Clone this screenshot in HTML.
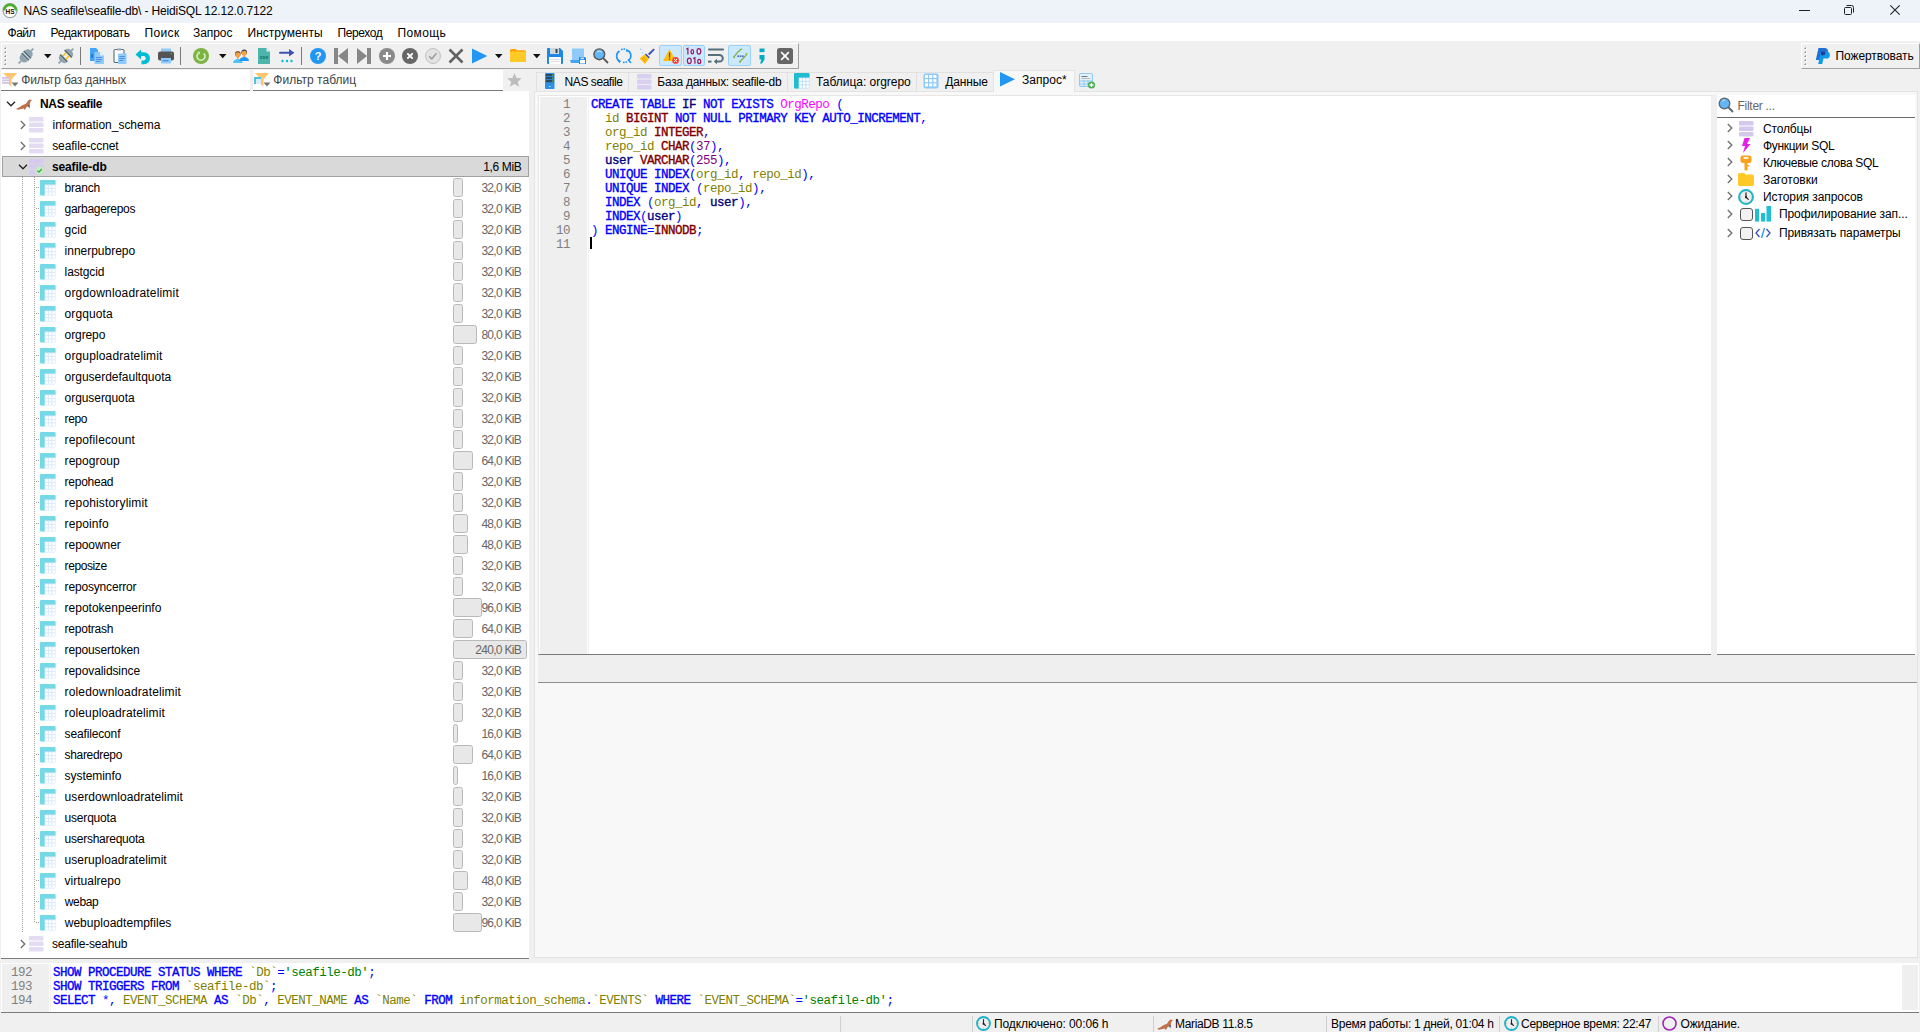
<!DOCTYPE html><html><head><meta charset="utf-8"><style>
*{margin:0;padding:0;box-sizing:border-box}
html,body{width:1920px;height:1032px;overflow:hidden;background:#f0f0f0;font-family:"Liberation Sans",sans-serif;font-size:12px;color:#000;position:relative}
.ab{position:absolute}
.t{position:absolute;white-space:nowrap;line-height:14px}
.mono{font-family:"Liberation Mono",monospace;font-size:12.5px;letter-spacing:-0.5px;line-height:14px;white-space:pre}
.kw{color:#0000ff;-webkit-text-stroke:0.35px #0000ff}
.dt{color:#800000;-webkit-text-stroke:0.35px #800000}
.fn{color:#000080;-webkit-text-stroke:0.35px #000080}
.fld{color:#808000}
.tbl{color:#ff00ff}
.num{color:#800080}
.sym{color:#0000ff}
.str{color:#008000}
svg{position:absolute;overflow:visible}
</style></head><body>
<div class="ab" style="left:0;top:0;width:1920px;height:23px;background:#eef3f9"></div>
<div class="t" style="left:23.40px;top:4px;letter-spacing:-0.154px;">NAS seafile\seafile-db\ - HeidiSQL 12.12.0.7122</div>
<svg style="left:2px;top:3px" width="16" height="16" viewBox="0 0 16 16"><circle cx="8" cy="7.6" r="7" fill="#fff" stroke="#9aa59a" stroke-width="1.2"/><path d="M0.8 7.6A7.2 7.2 0 0 1 15.2 7.6H12.8A4.8 4.4 0 0 0 3.2 7.6Z" fill="#4caf2a"/><text x="8" y="11.2" font-family="Liberation Sans" font-size="8" font-weight="bold" text-anchor="middle" fill="#111" textLength="9" lengthAdjust="spacingAndGlyphs">HS</text></svg>
<div class="ab" style="left:1799px;top:10px;width:11px;height:1px;background:#222"></div>
<svg style="left:1843px;top:4px" width="12" height="12" viewBox="0 0 12 12"><rect x="1.5" y="3.5" width="7" height="7" rx="1" fill="none" stroke="#222"/><path d="M3.5 1.5h5a2 2 0 0 1 2 2v5" fill="none" stroke="#222"/></svg>
<svg style="left:1890px;top:5px" width="10" height="10" viewBox="0 0 10 10"><path d="M0.3 0.3L9.7 9.7M9.7 0.3L0.3 9.7" stroke="#222" stroke-width="1.1"/></svg>
<div class="ab" style="left:0;top:23px;width:1920px;height:18px;background:#fff"></div>
<div class="t" style="left:7.50px;top:26px;letter-spacing:-0.467px;">Файл</div>
<div class="t" style="left:50.60px;top:26px;letter-spacing:-0.292px;">Редактировать</div>
<div class="t" style="left:144.40px;top:26px;letter-spacing:0.400px;">Поиск</div>
<div class="t" style="left:193.00px;top:26px;letter-spacing:-0.060px;">Запрос</div>
<div class="t" style="left:247.50px;top:26px;letter-spacing:0.020px;">Инструменты</div>
<div class="t" style="left:337.50px;top:26px;letter-spacing:-0.408px;">Переход</div>
<div class="t" style="left:397.50px;top:26px;letter-spacing:0.360px;">Помощь</div>
<div class="ab" style="left:1px;top:43px;width:798px;height:26px;background:#f0f0f0;border-top:1px solid #fff;border-left:1px solid #fff;border-right:1px solid #a0a0a0;border-bottom:1px solid #a0a0a0"></div>
<div class="ab" style="left:1801px;top:43px;width:119px;height:26px;background:#f0f0f0;border-top:1px solid #fff;border-left:1px solid #fff;border-right:1px solid #a0a0a0;border-bottom:1px solid #a0a0a0"></div>
<div class="t" style="left:1835.40px;top:49px;letter-spacing:-0.064px;">Пожертвовать</div>
<div class="ab" style="left:1px;top:70px;width:249px;height:21px;background:#fff;border-bottom:1px solid #7a7a7a"></div>
<div class="t" style="left:21.30px;top:73px;letter-spacing:-0.144px;color:#444">Фильтр баз данных</div>
<div class="ab" style="left:253px;top:70px;width:250px;height:21px;background:#fff;border-bottom:1px solid #7a7a7a"></div>
<div class="t" style="left:273.30px;top:73px;letter-spacing:0.025px;color:#444">Фильтр таблиц</div>
<div class="ab" style="left:1px;top:91px;width:528px;height:868px;background:#fff;border-bottom:1px solid #7a7a7a"></div>
<svg style="left:6px;top:101px" width="10" height="6" viewBox="0 0 10 6"><path d="M1 0.8L5 4.8L9 0.8" fill="none" stroke="#222" stroke-width="1.3"/></svg>
<svg style="left:16px;top:95px" width="16" height="16" viewBox="0 0 16 16"><path d="M0 14L3.4 12.2L6.8 10L10 8.8L11.6 6.2L13.4 4.6L16 5L14.6 6.6L13.6 9.5L12.6 12L11 11.5L8.8 15L7.6 13.4L2 14.8Z" fill="#c0714a"/><path d="M12.2 11L13.7 9.2L13.6 13.6Z" fill="#23386b"/></svg>
<div class="t" style="left:40.00px;top:97px;letter-spacing:-0.350px;font-weight:bold;">NAS seafile</div>
<svg style="left:20px;top:120px" width="6" height="10" viewBox="0 0 6 10"><path d="M0.8 1L4.8 5L0.8 9" fill="none" stroke="#6e6e6e" stroke-width="1.3"/></svg>
<svg style="left:29px;top:117px" width="15" height="16" viewBox="0 0 15 16"><rect x="0" y="0" width="14.5" height="4.5" rx="1" fill="#e4dcf3"/><rect x="0" y="5.5" width="14.5" height="4.5" rx="1" fill="#e4dcf3"/><rect x="0" y="11" width="14.5" height="4.5" rx="1" fill="#e4dcf3"/></svg>
<div class="t" style="left:52.50px;top:118px;letter-spacing:-0.012px;">information_schema</div>
<svg style="left:20px;top:141px" width="6" height="10" viewBox="0 0 6 10"><path d="M0.8 1L4.8 5L0.8 9" fill="none" stroke="#6e6e6e" stroke-width="1.3"/></svg>
<svg style="left:29px;top:138px" width="15" height="16" viewBox="0 0 15 16"><rect x="0" y="0" width="14.5" height="4.5" rx="1" fill="#e4dcf3"/><rect x="0" y="5.5" width="14.5" height="4.5" rx="1" fill="#e4dcf3"/><rect x="0" y="11" width="14.5" height="4.5" rx="1" fill="#e4dcf3"/></svg>
<div class="t" style="left:52.20px;top:139px;letter-spacing:-0.071px;">seafile-ccnet</div>
<div class="ab" style="left:2px;top:156px;width:527px;height:21px;background:#d9d9d9;border:1px solid #a0a0a0"></div>
<svg style="left:18px;top:164px" width="10" height="6" viewBox="0 0 10 6"><path d="M1 0.8L5 4.8L9 0.8" fill="none" stroke="#222" stroke-width="1.3"/></svg>
<svg style="left:29px;top:159px" width="15" height="16" viewBox="0 0 15 16"><rect x="0" y="0" width="14.5" height="4.5" rx="1" fill="#d7c9f0"/><rect x="0" y="5.5" width="14.5" height="4.5" rx="1" fill="#d7c9f0"/><rect x="0" y="11" width="14.5" height="4.5" rx="1" fill="#d7c9f0"/></svg>
<svg style="left:35px;top:166px" width="9" height="9" viewBox="0 0 9 9"><circle cx="4.5" cy="4.5" r="4.3" fill="#c6ecc6"/><path d="M2.2 4.6L3.9 6.2L6.8 3" fill="none" stroke="#2eaa3e" stroke-width="1.2"/></svg>
<div class="t" style="left:51.90px;top:160px;letter-spacing:-0.128px;font-weight:bold;">seafile-db</div>
<div class="t" style="left:483.30px;top:160px;letter-spacing:-0.383px;">1,6 MiB</div>
<div class="ab" style="left:22px;top:177px;width:1px;height:755px;background:repeating-linear-gradient(#a0a0a0 0 1px,transparent 1px 2px)"></div>
<div class="ab" style="left:34px;top:177px;width:1px;height:746px;background:repeating-linear-gradient(#a0a0a0 0 1px,transparent 1px 2px)"></div>
<div class="ab" style="left:36px;top:187px;width:4px;height:1px;background:repeating-linear-gradient(90deg,#a0a0a0 0 1px,transparent 1px 2px)"></div>
<svg style="left:40px;top:180px" width="16" height="16" viewBox="0 0 16 16"><rect x="0" y="0" width="15.5" height="15.5" rx="1.2" fill="#d3e8fb"/><path d="M1.2 0H14.3A1.2 1.2 0 0 1 15.5 1.2V4.6H4.6V15.5H1.2A1.2 1.2 0 0 1 0 14.3V1.2A1.2 1.2 0 0 1 1.2 0Z" fill="#74d8e6"/><rect x="5.3" y="5.3" width="2.6" height="2.6" fill="#fff"/><rect x="5.3" y="8.8" width="2.6" height="2.6" fill="#fff"/><rect x="5.3" y="12.3" width="2.6" height="2.6" fill="#fff"/><rect x="8.8" y="5.3" width="2.6" height="2.6" fill="#fff"/><rect x="8.8" y="8.8" width="2.6" height="2.6" fill="#fff"/><rect x="8.8" y="12.3" width="2.6" height="2.6" fill="#fff"/><rect x="12.3" y="5.3" width="2.6" height="2.6" fill="#fff"/><rect x="12.3" y="8.8" width="2.6" height="2.6" fill="#fff"/><rect x="12.3" y="12.3" width="2.6" height="2.6" fill="#fff"/></svg>
<div class="t" style="left:64.60px;top:181px;letter-spacing:-0.200px;">branch</div>
<div class="ab" style="left:453px;top:178px;width:10px;height:19px;background:#e8e8e8;border:1px solid #b9b9b9;border-radius:2.5px"></div>
<div class="t" style="left:481.40px;top:181px;letter-spacing:-0.729px;color:#666">32,0 KiB</div>
<div class="ab" style="left:36px;top:208px;width:4px;height:1px;background:repeating-linear-gradient(90deg,#a0a0a0 0 1px,transparent 1px 2px)"></div>
<svg style="left:40px;top:201px" width="16" height="16" viewBox="0 0 16 16"><rect x="0" y="0" width="15.5" height="15.5" rx="1.2" fill="#d3e8fb"/><path d="M1.2 0H14.3A1.2 1.2 0 0 1 15.5 1.2V4.6H4.6V15.5H1.2A1.2 1.2 0 0 1 0 14.3V1.2A1.2 1.2 0 0 1 1.2 0Z" fill="#74d8e6"/><rect x="5.3" y="5.3" width="2.6" height="2.6" fill="#fff"/><rect x="5.3" y="8.8" width="2.6" height="2.6" fill="#fff"/><rect x="5.3" y="12.3" width="2.6" height="2.6" fill="#fff"/><rect x="8.8" y="5.3" width="2.6" height="2.6" fill="#fff"/><rect x="8.8" y="8.8" width="2.6" height="2.6" fill="#fff"/><rect x="8.8" y="12.3" width="2.6" height="2.6" fill="#fff"/><rect x="12.3" y="5.3" width="2.6" height="2.6" fill="#fff"/><rect x="12.3" y="8.8" width="2.6" height="2.6" fill="#fff"/><rect x="12.3" y="12.3" width="2.6" height="2.6" fill="#fff"/></svg>
<div class="t" style="left:64.60px;top:202px;letter-spacing:-0.291px;">garbagerepos</div>
<div class="ab" style="left:453px;top:199px;width:10px;height:19px;background:#e8e8e8;border:1px solid #b9b9b9;border-radius:2.5px"></div>
<div class="t" style="left:481.40px;top:202px;letter-spacing:-0.729px;color:#666">32,0 KiB</div>
<div class="ab" style="left:36px;top:229px;width:4px;height:1px;background:repeating-linear-gradient(90deg,#a0a0a0 0 1px,transparent 1px 2px)"></div>
<svg style="left:40px;top:222px" width="16" height="16" viewBox="0 0 16 16"><rect x="0" y="0" width="15.5" height="15.5" rx="1.2" fill="#d3e8fb"/><path d="M1.2 0H14.3A1.2 1.2 0 0 1 15.5 1.2V4.6H4.6V15.5H1.2A1.2 1.2 0 0 1 0 14.3V1.2A1.2 1.2 0 0 1 1.2 0Z" fill="#74d8e6"/><rect x="5.3" y="5.3" width="2.6" height="2.6" fill="#fff"/><rect x="5.3" y="8.8" width="2.6" height="2.6" fill="#fff"/><rect x="5.3" y="12.3" width="2.6" height="2.6" fill="#fff"/><rect x="8.8" y="5.3" width="2.6" height="2.6" fill="#fff"/><rect x="8.8" y="8.8" width="2.6" height="2.6" fill="#fff"/><rect x="8.8" y="12.3" width="2.6" height="2.6" fill="#fff"/><rect x="12.3" y="5.3" width="2.6" height="2.6" fill="#fff"/><rect x="12.3" y="8.8" width="2.6" height="2.6" fill="#fff"/><rect x="12.3" y="12.3" width="2.6" height="2.6" fill="#fff"/></svg>
<div class="t" style="left:64.60px;top:223px;">gcid</div>
<div class="ab" style="left:453px;top:220px;width:10px;height:19px;background:#e8e8e8;border:1px solid #b9b9b9;border-radius:2.5px"></div>
<div class="t" style="left:481.40px;top:223px;letter-spacing:-0.729px;color:#666">32,0 KiB</div>
<div class="ab" style="left:36px;top:250px;width:4px;height:1px;background:repeating-linear-gradient(90deg,#a0a0a0 0 1px,transparent 1px 2px)"></div>
<svg style="left:40px;top:243px" width="16" height="16" viewBox="0 0 16 16"><rect x="0" y="0" width="15.5" height="15.5" rx="1.2" fill="#d3e8fb"/><path d="M1.2 0H14.3A1.2 1.2 0 0 1 15.5 1.2V4.6H4.6V15.5H1.2A1.2 1.2 0 0 1 0 14.3V1.2A1.2 1.2 0 0 1 1.2 0Z" fill="#74d8e6"/><rect x="5.3" y="5.3" width="2.6" height="2.6" fill="#fff"/><rect x="5.3" y="8.8" width="2.6" height="2.6" fill="#fff"/><rect x="5.3" y="12.3" width="2.6" height="2.6" fill="#fff"/><rect x="8.8" y="5.3" width="2.6" height="2.6" fill="#fff"/><rect x="8.8" y="8.8" width="2.6" height="2.6" fill="#fff"/><rect x="8.8" y="12.3" width="2.6" height="2.6" fill="#fff"/><rect x="12.3" y="5.3" width="2.6" height="2.6" fill="#fff"/><rect x="12.3" y="8.8" width="2.6" height="2.6" fill="#fff"/><rect x="12.3" y="12.3" width="2.6" height="2.6" fill="#fff"/></svg>
<div class="t" style="left:64.60px;top:244px;letter-spacing:-0.018px;">innerpubrepo</div>
<div class="ab" style="left:453px;top:241px;width:10px;height:19px;background:#e8e8e8;border:1px solid #b9b9b9;border-radius:2.5px"></div>
<div class="t" style="left:481.40px;top:244px;letter-spacing:-0.729px;color:#666">32,0 KiB</div>
<div class="ab" style="left:36px;top:271px;width:4px;height:1px;background:repeating-linear-gradient(90deg,#a0a0a0 0 1px,transparent 1px 2px)"></div>
<svg style="left:40px;top:264px" width="16" height="16" viewBox="0 0 16 16"><rect x="0" y="0" width="15.5" height="15.5" rx="1.2" fill="#d3e8fb"/><path d="M1.2 0H14.3A1.2 1.2 0 0 1 15.5 1.2V4.6H4.6V15.5H1.2A1.2 1.2 0 0 1 0 14.3V1.2A1.2 1.2 0 0 1 1.2 0Z" fill="#74d8e6"/><rect x="5.3" y="5.3" width="2.6" height="2.6" fill="#fff"/><rect x="5.3" y="8.8" width="2.6" height="2.6" fill="#fff"/><rect x="5.3" y="12.3" width="2.6" height="2.6" fill="#fff"/><rect x="8.8" y="5.3" width="2.6" height="2.6" fill="#fff"/><rect x="8.8" y="8.8" width="2.6" height="2.6" fill="#fff"/><rect x="8.8" y="12.3" width="2.6" height="2.6" fill="#fff"/><rect x="12.3" y="5.3" width="2.6" height="2.6" fill="#fff"/><rect x="12.3" y="8.8" width="2.6" height="2.6" fill="#fff"/><rect x="12.3" y="12.3" width="2.6" height="2.6" fill="#fff"/></svg>
<div class="t" style="left:64.60px;top:265px;letter-spacing:-0.114px;">lastgcid</div>
<div class="ab" style="left:453px;top:262px;width:10px;height:19px;background:#e8e8e8;border:1px solid #b9b9b9;border-radius:2.5px"></div>
<div class="t" style="left:481.40px;top:265px;letter-spacing:-0.729px;color:#666">32,0 KiB</div>
<div class="ab" style="left:36px;top:292px;width:4px;height:1px;background:repeating-linear-gradient(90deg,#a0a0a0 0 1px,transparent 1px 2px)"></div>
<svg style="left:40px;top:285px" width="16" height="16" viewBox="0 0 16 16"><rect x="0" y="0" width="15.5" height="15.5" rx="1.2" fill="#d3e8fb"/><path d="M1.2 0H14.3A1.2 1.2 0 0 1 15.5 1.2V4.6H4.6V15.5H1.2A1.2 1.2 0 0 1 0 14.3V1.2A1.2 1.2 0 0 1 1.2 0Z" fill="#74d8e6"/><rect x="5.3" y="5.3" width="2.6" height="2.6" fill="#fff"/><rect x="5.3" y="8.8" width="2.6" height="2.6" fill="#fff"/><rect x="5.3" y="12.3" width="2.6" height="2.6" fill="#fff"/><rect x="8.8" y="5.3" width="2.6" height="2.6" fill="#fff"/><rect x="8.8" y="8.8" width="2.6" height="2.6" fill="#fff"/><rect x="8.8" y="12.3" width="2.6" height="2.6" fill="#fff"/><rect x="12.3" y="5.3" width="2.6" height="2.6" fill="#fff"/><rect x="12.3" y="8.8" width="2.6" height="2.6" fill="#fff"/><rect x="12.3" y="12.3" width="2.6" height="2.6" fill="#fff"/></svg>
<div class="t" style="left:64.60px;top:286px;letter-spacing:0.179px;">orgdownloadratelimit</div>
<div class="ab" style="left:453px;top:283px;width:10px;height:19px;background:#e8e8e8;border:1px solid #b9b9b9;border-radius:2.5px"></div>
<div class="t" style="left:481.40px;top:286px;letter-spacing:-0.729px;color:#666">32,0 KiB</div>
<div class="ab" style="left:36px;top:313px;width:4px;height:1px;background:repeating-linear-gradient(90deg,#a0a0a0 0 1px,transparent 1px 2px)"></div>
<svg style="left:40px;top:306px" width="16" height="16" viewBox="0 0 16 16"><rect x="0" y="0" width="15.5" height="15.5" rx="1.2" fill="#d3e8fb"/><path d="M1.2 0H14.3A1.2 1.2 0 0 1 15.5 1.2V4.6H4.6V15.5H1.2A1.2 1.2 0 0 1 0 14.3V1.2A1.2 1.2 0 0 1 1.2 0Z" fill="#74d8e6"/><rect x="5.3" y="5.3" width="2.6" height="2.6" fill="#fff"/><rect x="5.3" y="8.8" width="2.6" height="2.6" fill="#fff"/><rect x="5.3" y="12.3" width="2.6" height="2.6" fill="#fff"/><rect x="8.8" y="5.3" width="2.6" height="2.6" fill="#fff"/><rect x="8.8" y="8.8" width="2.6" height="2.6" fill="#fff"/><rect x="8.8" y="12.3" width="2.6" height="2.6" fill="#fff"/><rect x="12.3" y="5.3" width="2.6" height="2.6" fill="#fff"/><rect x="12.3" y="8.8" width="2.6" height="2.6" fill="#fff"/><rect x="12.3" y="12.3" width="2.6" height="2.6" fill="#fff"/></svg>
<div class="t" style="left:64.60px;top:307px;letter-spacing:0.086px;">orgquota</div>
<div class="ab" style="left:453px;top:304px;width:10px;height:19px;background:#e8e8e8;border:1px solid #b9b9b9;border-radius:2.5px"></div>
<div class="t" style="left:481.40px;top:307px;letter-spacing:-0.729px;color:#666">32,0 KiB</div>
<div class="ab" style="left:36px;top:334px;width:4px;height:1px;background:repeating-linear-gradient(90deg,#a0a0a0 0 1px,transparent 1px 2px)"></div>
<svg style="left:40px;top:327px" width="16" height="16" viewBox="0 0 16 16"><rect x="0" y="0" width="15.5" height="15.5" rx="1.2" fill="#d3e8fb"/><path d="M1.2 0H14.3A1.2 1.2 0 0 1 15.5 1.2V4.6H4.6V15.5H1.2A1.2 1.2 0 0 1 0 14.3V1.2A1.2 1.2 0 0 1 1.2 0Z" fill="#74d8e6"/><rect x="5.3" y="5.3" width="2.6" height="2.6" fill="#fff"/><rect x="5.3" y="8.8" width="2.6" height="2.6" fill="#fff"/><rect x="5.3" y="12.3" width="2.6" height="2.6" fill="#fff"/><rect x="8.8" y="5.3" width="2.6" height="2.6" fill="#fff"/><rect x="8.8" y="8.8" width="2.6" height="2.6" fill="#fff"/><rect x="8.8" y="12.3" width="2.6" height="2.6" fill="#fff"/><rect x="12.3" y="5.3" width="2.6" height="2.6" fill="#fff"/><rect x="12.3" y="8.8" width="2.6" height="2.6" fill="#fff"/><rect x="12.3" y="12.3" width="2.6" height="2.6" fill="#fff"/></svg>
<div class="t" style="left:64.60px;top:328px;letter-spacing:-0.100px;">orgrepo</div>
<div class="ab" style="left:453px;top:325px;width:24px;height:19px;background:#e8e8e8;border:1px solid #b9b9b9;border-radius:2.5px"></div>
<div class="t" style="left:481.40px;top:328px;letter-spacing:-0.729px;color:#666">80,0 KiB</div>
<div class="ab" style="left:36px;top:355px;width:4px;height:1px;background:repeating-linear-gradient(90deg,#a0a0a0 0 1px,transparent 1px 2px)"></div>
<svg style="left:40px;top:348px" width="16" height="16" viewBox="0 0 16 16"><rect x="0" y="0" width="15.5" height="15.5" rx="1.2" fill="#d3e8fb"/><path d="M1.2 0H14.3A1.2 1.2 0 0 1 15.5 1.2V4.6H4.6V15.5H1.2A1.2 1.2 0 0 1 0 14.3V1.2A1.2 1.2 0 0 1 1.2 0Z" fill="#74d8e6"/><rect x="5.3" y="5.3" width="2.6" height="2.6" fill="#fff"/><rect x="5.3" y="8.8" width="2.6" height="2.6" fill="#fff"/><rect x="5.3" y="12.3" width="2.6" height="2.6" fill="#fff"/><rect x="8.8" y="5.3" width="2.6" height="2.6" fill="#fff"/><rect x="8.8" y="8.8" width="2.6" height="2.6" fill="#fff"/><rect x="8.8" y="12.3" width="2.6" height="2.6" fill="#fff"/><rect x="12.3" y="5.3" width="2.6" height="2.6" fill="#fff"/><rect x="12.3" y="8.8" width="2.6" height="2.6" fill="#fff"/><rect x="12.3" y="12.3" width="2.6" height="2.6" fill="#fff"/></svg>
<div class="t" style="left:64.60px;top:349px;letter-spacing:0.135px;">orguploadratelimit</div>
<div class="ab" style="left:453px;top:346px;width:10px;height:19px;background:#e8e8e8;border:1px solid #b9b9b9;border-radius:2.5px"></div>
<div class="t" style="left:481.40px;top:349px;letter-spacing:-0.729px;color:#666">32,0 KiB</div>
<div class="ab" style="left:36px;top:376px;width:4px;height:1px;background:repeating-linear-gradient(90deg,#a0a0a0 0 1px,transparent 1px 2px)"></div>
<svg style="left:40px;top:369px" width="16" height="16" viewBox="0 0 16 16"><rect x="0" y="0" width="15.5" height="15.5" rx="1.2" fill="#d3e8fb"/><path d="M1.2 0H14.3A1.2 1.2 0 0 1 15.5 1.2V4.6H4.6V15.5H1.2A1.2 1.2 0 0 1 0 14.3V1.2A1.2 1.2 0 0 1 1.2 0Z" fill="#74d8e6"/><rect x="5.3" y="5.3" width="2.6" height="2.6" fill="#fff"/><rect x="5.3" y="8.8" width="2.6" height="2.6" fill="#fff"/><rect x="5.3" y="12.3" width="2.6" height="2.6" fill="#fff"/><rect x="8.8" y="5.3" width="2.6" height="2.6" fill="#fff"/><rect x="8.8" y="8.8" width="2.6" height="2.6" fill="#fff"/><rect x="8.8" y="12.3" width="2.6" height="2.6" fill="#fff"/><rect x="12.3" y="5.3" width="2.6" height="2.6" fill="#fff"/><rect x="12.3" y="8.8" width="2.6" height="2.6" fill="#fff"/><rect x="12.3" y="12.3" width="2.6" height="2.6" fill="#fff"/></svg>
<div class="t" style="left:64.60px;top:370px;letter-spacing:-0.011px;">orguserdefaultquota</div>
<div class="ab" style="left:453px;top:367px;width:10px;height:19px;background:#e8e8e8;border:1px solid #b9b9b9;border-radius:2.5px"></div>
<div class="t" style="left:481.40px;top:370px;letter-spacing:-0.729px;color:#666">32,0 KiB</div>
<div class="ab" style="left:36px;top:397px;width:4px;height:1px;background:repeating-linear-gradient(90deg,#a0a0a0 0 1px,transparent 1px 2px)"></div>
<svg style="left:40px;top:390px" width="16" height="16" viewBox="0 0 16 16"><rect x="0" y="0" width="15.5" height="15.5" rx="1.2" fill="#d3e8fb"/><path d="M1.2 0H14.3A1.2 1.2 0 0 1 15.5 1.2V4.6H4.6V15.5H1.2A1.2 1.2 0 0 1 0 14.3V1.2A1.2 1.2 0 0 1 1.2 0Z" fill="#74d8e6"/><rect x="5.3" y="5.3" width="2.6" height="2.6" fill="#fff"/><rect x="5.3" y="8.8" width="2.6" height="2.6" fill="#fff"/><rect x="5.3" y="12.3" width="2.6" height="2.6" fill="#fff"/><rect x="8.8" y="5.3" width="2.6" height="2.6" fill="#fff"/><rect x="8.8" y="8.8" width="2.6" height="2.6" fill="#fff"/><rect x="8.8" y="12.3" width="2.6" height="2.6" fill="#fff"/><rect x="12.3" y="5.3" width="2.6" height="2.6" fill="#fff"/><rect x="12.3" y="8.8" width="2.6" height="2.6" fill="#fff"/><rect x="12.3" y="12.3" width="2.6" height="2.6" fill="#fff"/></svg>
<div class="t" style="left:64.60px;top:391px;letter-spacing:-0.064px;">orguserquota</div>
<div class="ab" style="left:453px;top:388px;width:10px;height:19px;background:#e8e8e8;border:1px solid #b9b9b9;border-radius:2.5px"></div>
<div class="t" style="left:481.40px;top:391px;letter-spacing:-0.729px;color:#666">32,0 KiB</div>
<div class="ab" style="left:36px;top:418px;width:4px;height:1px;background:repeating-linear-gradient(90deg,#a0a0a0 0 1px,transparent 1px 2px)"></div>
<svg style="left:40px;top:411px" width="16" height="16" viewBox="0 0 16 16"><rect x="0" y="0" width="15.5" height="15.5" rx="1.2" fill="#d3e8fb"/><path d="M1.2 0H14.3A1.2 1.2 0 0 1 15.5 1.2V4.6H4.6V15.5H1.2A1.2 1.2 0 0 1 0 14.3V1.2A1.2 1.2 0 0 1 1.2 0Z" fill="#74d8e6"/><rect x="5.3" y="5.3" width="2.6" height="2.6" fill="#fff"/><rect x="5.3" y="8.8" width="2.6" height="2.6" fill="#fff"/><rect x="5.3" y="12.3" width="2.6" height="2.6" fill="#fff"/><rect x="8.8" y="5.3" width="2.6" height="2.6" fill="#fff"/><rect x="8.8" y="8.8" width="2.6" height="2.6" fill="#fff"/><rect x="8.8" y="12.3" width="2.6" height="2.6" fill="#fff"/><rect x="12.3" y="5.3" width="2.6" height="2.6" fill="#fff"/><rect x="12.3" y="8.8" width="2.6" height="2.6" fill="#fff"/><rect x="12.3" y="12.3" width="2.6" height="2.6" fill="#fff"/></svg>
<div class="t" style="left:64.60px;top:412px;letter-spacing:-0.367px;">repo</div>
<div class="ab" style="left:453px;top:409px;width:10px;height:19px;background:#e8e8e8;border:1px solid #b9b9b9;border-radius:2.5px"></div>
<div class="t" style="left:481.40px;top:412px;letter-spacing:-0.729px;color:#666">32,0 KiB</div>
<div class="ab" style="left:36px;top:439px;width:4px;height:1px;background:repeating-linear-gradient(90deg,#a0a0a0 0 1px,transparent 1px 2px)"></div>
<svg style="left:40px;top:432px" width="16" height="16" viewBox="0 0 16 16"><rect x="0" y="0" width="15.5" height="15.5" rx="1.2" fill="#d3e8fb"/><path d="M1.2 0H14.3A1.2 1.2 0 0 1 15.5 1.2V4.6H4.6V15.5H1.2A1.2 1.2 0 0 1 0 14.3V1.2A1.2 1.2 0 0 1 1.2 0Z" fill="#74d8e6"/><rect x="5.3" y="5.3" width="2.6" height="2.6" fill="#fff"/><rect x="5.3" y="8.8" width="2.6" height="2.6" fill="#fff"/><rect x="5.3" y="12.3" width="2.6" height="2.6" fill="#fff"/><rect x="8.8" y="5.3" width="2.6" height="2.6" fill="#fff"/><rect x="8.8" y="8.8" width="2.6" height="2.6" fill="#fff"/><rect x="8.8" y="12.3" width="2.6" height="2.6" fill="#fff"/><rect x="12.3" y="5.3" width="2.6" height="2.6" fill="#fff"/><rect x="12.3" y="8.8" width="2.6" height="2.6" fill="#fff"/><rect x="12.3" y="12.3" width="2.6" height="2.6" fill="#fff"/></svg>
<div class="t" style="left:64.60px;top:433px;letter-spacing:0.125px;">repofilecount</div>
<div class="ab" style="left:453px;top:430px;width:10px;height:19px;background:#e8e8e8;border:1px solid #b9b9b9;border-radius:2.5px"></div>
<div class="t" style="left:481.40px;top:433px;letter-spacing:-0.729px;color:#666">32,0 KiB</div>
<div class="ab" style="left:36px;top:460px;width:4px;height:1px;background:repeating-linear-gradient(90deg,#a0a0a0 0 1px,transparent 1px 2px)"></div>
<svg style="left:40px;top:453px" width="16" height="16" viewBox="0 0 16 16"><rect x="0" y="0" width="15.5" height="15.5" rx="1.2" fill="#d3e8fb"/><path d="M1.2 0H14.3A1.2 1.2 0 0 1 15.5 1.2V4.6H4.6V15.5H1.2A1.2 1.2 0 0 1 0 14.3V1.2A1.2 1.2 0 0 1 1.2 0Z" fill="#74d8e6"/><rect x="5.3" y="5.3" width="2.6" height="2.6" fill="#fff"/><rect x="5.3" y="8.8" width="2.6" height="2.6" fill="#fff"/><rect x="5.3" y="12.3" width="2.6" height="2.6" fill="#fff"/><rect x="8.8" y="5.3" width="2.6" height="2.6" fill="#fff"/><rect x="8.8" y="8.8" width="2.6" height="2.6" fill="#fff"/><rect x="8.8" y="12.3" width="2.6" height="2.6" fill="#fff"/><rect x="12.3" y="5.3" width="2.6" height="2.6" fill="#fff"/><rect x="12.3" y="8.8" width="2.6" height="2.6" fill="#fff"/><rect x="12.3" y="12.3" width="2.6" height="2.6" fill="#fff"/></svg>
<div class="t" style="left:64.60px;top:454px;letter-spacing:0.037px;">repogroup</div>
<div class="ab" style="left:453px;top:451px;width:20px;height:19px;background:#e8e8e8;border:1px solid #b9b9b9;border-radius:2.5px"></div>
<div class="t" style="left:481.40px;top:454px;letter-spacing:-0.729px;color:#666">64,0 KiB</div>
<div class="ab" style="left:36px;top:481px;width:4px;height:1px;background:repeating-linear-gradient(90deg,#a0a0a0 0 1px,transparent 1px 2px)"></div>
<svg style="left:40px;top:474px" width="16" height="16" viewBox="0 0 16 16"><rect x="0" y="0" width="15.5" height="15.5" rx="1.2" fill="#d3e8fb"/><path d="M1.2 0H14.3A1.2 1.2 0 0 1 15.5 1.2V4.6H4.6V15.5H1.2A1.2 1.2 0 0 1 0 14.3V1.2A1.2 1.2 0 0 1 1.2 0Z" fill="#74d8e6"/><rect x="5.3" y="5.3" width="2.6" height="2.6" fill="#fff"/><rect x="5.3" y="8.8" width="2.6" height="2.6" fill="#fff"/><rect x="5.3" y="12.3" width="2.6" height="2.6" fill="#fff"/><rect x="8.8" y="5.3" width="2.6" height="2.6" fill="#fff"/><rect x="8.8" y="8.8" width="2.6" height="2.6" fill="#fff"/><rect x="8.8" y="12.3" width="2.6" height="2.6" fill="#fff"/><rect x="12.3" y="5.3" width="2.6" height="2.6" fill="#fff"/><rect x="12.3" y="8.8" width="2.6" height="2.6" fill="#fff"/><rect x="12.3" y="12.3" width="2.6" height="2.6" fill="#fff"/></svg>
<div class="t" style="left:64.60px;top:475px;letter-spacing:-0.257px;">repohead</div>
<div class="ab" style="left:453px;top:472px;width:10px;height:19px;background:#e8e8e8;border:1px solid #b9b9b9;border-radius:2.5px"></div>
<div class="t" style="left:481.40px;top:475px;letter-spacing:-0.729px;color:#666">32,0 KiB</div>
<div class="ab" style="left:36px;top:502px;width:4px;height:1px;background:repeating-linear-gradient(90deg,#a0a0a0 0 1px,transparent 1px 2px)"></div>
<svg style="left:40px;top:495px" width="16" height="16" viewBox="0 0 16 16"><rect x="0" y="0" width="15.5" height="15.5" rx="1.2" fill="#d3e8fb"/><path d="M1.2 0H14.3A1.2 1.2 0 0 1 15.5 1.2V4.6H4.6V15.5H1.2A1.2 1.2 0 0 1 0 14.3V1.2A1.2 1.2 0 0 1 1.2 0Z" fill="#74d8e6"/><rect x="5.3" y="5.3" width="2.6" height="2.6" fill="#fff"/><rect x="5.3" y="8.8" width="2.6" height="2.6" fill="#fff"/><rect x="5.3" y="12.3" width="2.6" height="2.6" fill="#fff"/><rect x="8.8" y="5.3" width="2.6" height="2.6" fill="#fff"/><rect x="8.8" y="8.8" width="2.6" height="2.6" fill="#fff"/><rect x="8.8" y="12.3" width="2.6" height="2.6" fill="#fff"/><rect x="12.3" y="5.3" width="2.6" height="2.6" fill="#fff"/><rect x="12.3" y="8.8" width="2.6" height="2.6" fill="#fff"/><rect x="12.3" y="12.3" width="2.6" height="2.6" fill="#fff"/></svg>
<div class="t" style="left:64.60px;top:496px;letter-spacing:0.153px;">repohistorylimit</div>
<div class="ab" style="left:453px;top:493px;width:10px;height:19px;background:#e8e8e8;border:1px solid #b9b9b9;border-radius:2.5px"></div>
<div class="t" style="left:481.40px;top:496px;letter-spacing:-0.729px;color:#666">32,0 KiB</div>
<div class="ab" style="left:36px;top:523px;width:4px;height:1px;background:repeating-linear-gradient(90deg,#a0a0a0 0 1px,transparent 1px 2px)"></div>
<svg style="left:40px;top:516px" width="16" height="16" viewBox="0 0 16 16"><rect x="0" y="0" width="15.5" height="15.5" rx="1.2" fill="#d3e8fb"/><path d="M1.2 0H14.3A1.2 1.2 0 0 1 15.5 1.2V4.6H4.6V15.5H1.2A1.2 1.2 0 0 1 0 14.3V1.2A1.2 1.2 0 0 1 1.2 0Z" fill="#74d8e6"/><rect x="5.3" y="5.3" width="2.6" height="2.6" fill="#fff"/><rect x="5.3" y="8.8" width="2.6" height="2.6" fill="#fff"/><rect x="5.3" y="12.3" width="2.6" height="2.6" fill="#fff"/><rect x="8.8" y="5.3" width="2.6" height="2.6" fill="#fff"/><rect x="8.8" y="8.8" width="2.6" height="2.6" fill="#fff"/><rect x="8.8" y="12.3" width="2.6" height="2.6" fill="#fff"/><rect x="12.3" y="5.3" width="2.6" height="2.6" fill="#fff"/><rect x="12.3" y="8.8" width="2.6" height="2.6" fill="#fff"/><rect x="12.3" y="12.3" width="2.6" height="2.6" fill="#fff"/></svg>
<div class="t" style="left:64.60px;top:517px;letter-spacing:0.086px;">repoinfo</div>
<div class="ab" style="left:453px;top:514px;width:15px;height:19px;background:#e8e8e8;border:1px solid #b9b9b9;border-radius:2.5px"></div>
<div class="t" style="left:481.40px;top:517px;letter-spacing:-0.729px;color:#666">48,0 KiB</div>
<div class="ab" style="left:36px;top:544px;width:4px;height:1px;background:repeating-linear-gradient(90deg,#a0a0a0 0 1px,transparent 1px 2px)"></div>
<svg style="left:40px;top:537px" width="16" height="16" viewBox="0 0 16 16"><rect x="0" y="0" width="15.5" height="15.5" rx="1.2" fill="#d3e8fb"/><path d="M1.2 0H14.3A1.2 1.2 0 0 1 15.5 1.2V4.6H4.6V15.5H1.2A1.2 1.2 0 0 1 0 14.3V1.2A1.2 1.2 0 0 1 1.2 0Z" fill="#74d8e6"/><rect x="5.3" y="5.3" width="2.6" height="2.6" fill="#fff"/><rect x="5.3" y="8.8" width="2.6" height="2.6" fill="#fff"/><rect x="5.3" y="12.3" width="2.6" height="2.6" fill="#fff"/><rect x="8.8" y="5.3" width="2.6" height="2.6" fill="#fff"/><rect x="8.8" y="8.8" width="2.6" height="2.6" fill="#fff"/><rect x="8.8" y="12.3" width="2.6" height="2.6" fill="#fff"/><rect x="12.3" y="5.3" width="2.6" height="2.6" fill="#fff"/><rect x="12.3" y="8.8" width="2.6" height="2.6" fill="#fff"/><rect x="12.3" y="12.3" width="2.6" height="2.6" fill="#fff"/></svg>
<div class="t" style="left:64.60px;top:538px;letter-spacing:-0.062px;">repoowner</div>
<div class="ab" style="left:453px;top:535px;width:15px;height:19px;background:#e8e8e8;border:1px solid #b9b9b9;border-radius:2.5px"></div>
<div class="t" style="left:481.40px;top:538px;letter-spacing:-0.729px;color:#666">48,0 KiB</div>
<div class="ab" style="left:36px;top:565px;width:4px;height:1px;background:repeating-linear-gradient(90deg,#a0a0a0 0 1px,transparent 1px 2px)"></div>
<svg style="left:40px;top:558px" width="16" height="16" viewBox="0 0 16 16"><rect x="0" y="0" width="15.5" height="15.5" rx="1.2" fill="#d3e8fb"/><path d="M1.2 0H14.3A1.2 1.2 0 0 1 15.5 1.2V4.6H4.6V15.5H1.2A1.2 1.2 0 0 1 0 14.3V1.2A1.2 1.2 0 0 1 1.2 0Z" fill="#74d8e6"/><rect x="5.3" y="5.3" width="2.6" height="2.6" fill="#fff"/><rect x="5.3" y="8.8" width="2.6" height="2.6" fill="#fff"/><rect x="5.3" y="12.3" width="2.6" height="2.6" fill="#fff"/><rect x="8.8" y="5.3" width="2.6" height="2.6" fill="#fff"/><rect x="8.8" y="8.8" width="2.6" height="2.6" fill="#fff"/><rect x="8.8" y="12.3" width="2.6" height="2.6" fill="#fff"/><rect x="12.3" y="5.3" width="2.6" height="2.6" fill="#fff"/><rect x="12.3" y="8.8" width="2.6" height="2.6" fill="#fff"/><rect x="12.3" y="12.3" width="2.6" height="2.6" fill="#fff"/></svg>
<div class="t" style="left:64.60px;top:559px;letter-spacing:-0.414px;">reposize</div>
<div class="ab" style="left:453px;top:556px;width:10px;height:19px;background:#e8e8e8;border:1px solid #b9b9b9;border-radius:2.5px"></div>
<div class="t" style="left:481.40px;top:559px;letter-spacing:-0.729px;color:#666">32,0 KiB</div>
<div class="ab" style="left:36px;top:586px;width:4px;height:1px;background:repeating-linear-gradient(90deg,#a0a0a0 0 1px,transparent 1px 2px)"></div>
<svg style="left:40px;top:579px" width="16" height="16" viewBox="0 0 16 16"><rect x="0" y="0" width="15.5" height="15.5" rx="1.2" fill="#d3e8fb"/><path d="M1.2 0H14.3A1.2 1.2 0 0 1 15.5 1.2V4.6H4.6V15.5H1.2A1.2 1.2 0 0 1 0 14.3V1.2A1.2 1.2 0 0 1 1.2 0Z" fill="#74d8e6"/><rect x="5.3" y="5.3" width="2.6" height="2.6" fill="#fff"/><rect x="5.3" y="8.8" width="2.6" height="2.6" fill="#fff"/><rect x="5.3" y="12.3" width="2.6" height="2.6" fill="#fff"/><rect x="8.8" y="5.3" width="2.6" height="2.6" fill="#fff"/><rect x="8.8" y="8.8" width="2.6" height="2.6" fill="#fff"/><rect x="8.8" y="12.3" width="2.6" height="2.6" fill="#fff"/><rect x="12.3" y="5.3" width="2.6" height="2.6" fill="#fff"/><rect x="12.3" y="8.8" width="2.6" height="2.6" fill="#fff"/><rect x="12.3" y="12.3" width="2.6" height="2.6" fill="#fff"/></svg>
<div class="t" style="left:64.60px;top:580px;letter-spacing:-0.167px;">reposyncerror</div>
<div class="ab" style="left:453px;top:577px;width:10px;height:19px;background:#e8e8e8;border:1px solid #b9b9b9;border-radius:2.5px"></div>
<div class="t" style="left:481.40px;top:580px;letter-spacing:-0.729px;color:#666">32,0 KiB</div>
<div class="ab" style="left:36px;top:607px;width:4px;height:1px;background:repeating-linear-gradient(90deg,#a0a0a0 0 1px,transparent 1px 2px)"></div>
<svg style="left:40px;top:600px" width="16" height="16" viewBox="0 0 16 16"><rect x="0" y="0" width="15.5" height="15.5" rx="1.2" fill="#d3e8fb"/><path d="M1.2 0H14.3A1.2 1.2 0 0 1 15.5 1.2V4.6H4.6V15.5H1.2A1.2 1.2 0 0 1 0 14.3V1.2A1.2 1.2 0 0 1 1.2 0Z" fill="#74d8e6"/><rect x="5.3" y="5.3" width="2.6" height="2.6" fill="#fff"/><rect x="5.3" y="8.8" width="2.6" height="2.6" fill="#fff"/><rect x="5.3" y="12.3" width="2.6" height="2.6" fill="#fff"/><rect x="8.8" y="5.3" width="2.6" height="2.6" fill="#fff"/><rect x="8.8" y="8.8" width="2.6" height="2.6" fill="#fff"/><rect x="8.8" y="12.3" width="2.6" height="2.6" fill="#fff"/><rect x="12.3" y="5.3" width="2.6" height="2.6" fill="#fff"/><rect x="12.3" y="8.8" width="2.6" height="2.6" fill="#fff"/><rect x="12.3" y="12.3" width="2.6" height="2.6" fill="#fff"/></svg>
<div class="t" style="left:64.60px;top:601px;">repotokenpeerinfo</div>
<div class="ab" style="left:453px;top:598px;width:29px;height:19px;background:#e8e8e8;border:1px solid #b9b9b9;border-radius:2.5px"></div>
<div class="t" style="left:481.40px;top:601px;letter-spacing:-0.729px;color:#666">96,0 KiB</div>
<div class="ab" style="left:36px;top:628px;width:4px;height:1px;background:repeating-linear-gradient(90deg,#a0a0a0 0 1px,transparent 1px 2px)"></div>
<svg style="left:40px;top:621px" width="16" height="16" viewBox="0 0 16 16"><rect x="0" y="0" width="15.5" height="15.5" rx="1.2" fill="#d3e8fb"/><path d="M1.2 0H14.3A1.2 1.2 0 0 1 15.5 1.2V4.6H4.6V15.5H1.2A1.2 1.2 0 0 1 0 14.3V1.2A1.2 1.2 0 0 1 1.2 0Z" fill="#74d8e6"/><rect x="5.3" y="5.3" width="2.6" height="2.6" fill="#fff"/><rect x="5.3" y="8.8" width="2.6" height="2.6" fill="#fff"/><rect x="5.3" y="12.3" width="2.6" height="2.6" fill="#fff"/><rect x="8.8" y="5.3" width="2.6" height="2.6" fill="#fff"/><rect x="8.8" y="8.8" width="2.6" height="2.6" fill="#fff"/><rect x="8.8" y="12.3" width="2.6" height="2.6" fill="#fff"/><rect x="12.3" y="5.3" width="2.6" height="2.6" fill="#fff"/><rect x="12.3" y="8.8" width="2.6" height="2.6" fill="#fff"/><rect x="12.3" y="12.3" width="2.6" height="2.6" fill="#fff"/></svg>
<div class="t" style="left:64.60px;top:622px;letter-spacing:-0.225px;">repotrash</div>
<div class="ab" style="left:453px;top:619px;width:20px;height:19px;background:#e8e8e8;border:1px solid #b9b9b9;border-radius:2.5px"></div>
<div class="t" style="left:481.40px;top:622px;letter-spacing:-0.729px;color:#666">64,0 KiB</div>
<div class="ab" style="left:36px;top:649px;width:4px;height:1px;background:repeating-linear-gradient(90deg,#a0a0a0 0 1px,transparent 1px 2px)"></div>
<svg style="left:40px;top:642px" width="16" height="16" viewBox="0 0 16 16"><rect x="0" y="0" width="15.5" height="15.5" rx="1.2" fill="#d3e8fb"/><path d="M1.2 0H14.3A1.2 1.2 0 0 1 15.5 1.2V4.6H4.6V15.5H1.2A1.2 1.2 0 0 1 0 14.3V1.2A1.2 1.2 0 0 1 1.2 0Z" fill="#74d8e6"/><rect x="5.3" y="5.3" width="2.6" height="2.6" fill="#fff"/><rect x="5.3" y="8.8" width="2.6" height="2.6" fill="#fff"/><rect x="5.3" y="12.3" width="2.6" height="2.6" fill="#fff"/><rect x="8.8" y="5.3" width="2.6" height="2.6" fill="#fff"/><rect x="8.8" y="8.8" width="2.6" height="2.6" fill="#fff"/><rect x="8.8" y="12.3" width="2.6" height="2.6" fill="#fff"/><rect x="12.3" y="5.3" width="2.6" height="2.6" fill="#fff"/><rect x="12.3" y="8.8" width="2.6" height="2.6" fill="#fff"/><rect x="12.3" y="12.3" width="2.6" height="2.6" fill="#fff"/></svg>
<div class="t" style="left:64.60px;top:643px;letter-spacing:-0.133px;">repousertoken</div>
<div class="ab" style="left:453px;top:640px;width:74px;height:19px;background:#e8e8e8;border:1px solid #b9b9b9;border-radius:2.5px"></div>
<div class="t" style="left:475.20px;top:643px;letter-spacing:-0.688px;color:#666">240,0 KiB</div>
<div class="ab" style="left:36px;top:670px;width:4px;height:1px;background:repeating-linear-gradient(90deg,#a0a0a0 0 1px,transparent 1px 2px)"></div>
<svg style="left:40px;top:663px" width="16" height="16" viewBox="0 0 16 16"><rect x="0" y="0" width="15.5" height="15.5" rx="1.2" fill="#d3e8fb"/><path d="M1.2 0H14.3A1.2 1.2 0 0 1 15.5 1.2V4.6H4.6V15.5H1.2A1.2 1.2 0 0 1 0 14.3V1.2A1.2 1.2 0 0 1 1.2 0Z" fill="#74d8e6"/><rect x="5.3" y="5.3" width="2.6" height="2.6" fill="#fff"/><rect x="5.3" y="8.8" width="2.6" height="2.6" fill="#fff"/><rect x="5.3" y="12.3" width="2.6" height="2.6" fill="#fff"/><rect x="8.8" y="5.3" width="2.6" height="2.6" fill="#fff"/><rect x="8.8" y="8.8" width="2.6" height="2.6" fill="#fff"/><rect x="8.8" y="12.3" width="2.6" height="2.6" fill="#fff"/><rect x="12.3" y="5.3" width="2.6" height="2.6" fill="#fff"/><rect x="12.3" y="8.8" width="2.6" height="2.6" fill="#fff"/><rect x="12.3" y="12.3" width="2.6" height="2.6" fill="#fff"/></svg>
<div class="t" style="left:64.60px;top:664px;letter-spacing:-0.092px;">repovalidsince</div>
<div class="ab" style="left:453px;top:661px;width:10px;height:19px;background:#e8e8e8;border:1px solid #b9b9b9;border-radius:2.5px"></div>
<div class="t" style="left:481.40px;top:664px;letter-spacing:-0.729px;color:#666">32,0 KiB</div>
<div class="ab" style="left:36px;top:691px;width:4px;height:1px;background:repeating-linear-gradient(90deg,#a0a0a0 0 1px,transparent 1px 2px)"></div>
<svg style="left:40px;top:684px" width="16" height="16" viewBox="0 0 16 16"><rect x="0" y="0" width="15.5" height="15.5" rx="1.2" fill="#d3e8fb"/><path d="M1.2 0H14.3A1.2 1.2 0 0 1 15.5 1.2V4.6H4.6V15.5H1.2A1.2 1.2 0 0 1 0 14.3V1.2A1.2 1.2 0 0 1 1.2 0Z" fill="#74d8e6"/><rect x="5.3" y="5.3" width="2.6" height="2.6" fill="#fff"/><rect x="5.3" y="8.8" width="2.6" height="2.6" fill="#fff"/><rect x="5.3" y="12.3" width="2.6" height="2.6" fill="#fff"/><rect x="8.8" y="5.3" width="2.6" height="2.6" fill="#fff"/><rect x="8.8" y="8.8" width="2.6" height="2.6" fill="#fff"/><rect x="8.8" y="12.3" width="2.6" height="2.6" fill="#fff"/><rect x="12.3" y="5.3" width="2.6" height="2.6" fill="#fff"/><rect x="12.3" y="8.8" width="2.6" height="2.6" fill="#fff"/><rect x="12.3" y="12.3" width="2.6" height="2.6" fill="#fff"/></svg>
<div class="t" style="left:64.60px;top:685px;letter-spacing:0.145px;">roledownloadratelimit</div>
<div class="ab" style="left:453px;top:682px;width:10px;height:19px;background:#e8e8e8;border:1px solid #b9b9b9;border-radius:2.5px"></div>
<div class="t" style="left:481.40px;top:685px;letter-spacing:-0.729px;color:#666">32,0 KiB</div>
<div class="ab" style="left:36px;top:712px;width:4px;height:1px;background:repeating-linear-gradient(90deg,#a0a0a0 0 1px,transparent 1px 2px)"></div>
<svg style="left:40px;top:705px" width="16" height="16" viewBox="0 0 16 16"><rect x="0" y="0" width="15.5" height="15.5" rx="1.2" fill="#d3e8fb"/><path d="M1.2 0H14.3A1.2 1.2 0 0 1 15.5 1.2V4.6H4.6V15.5H1.2A1.2 1.2 0 0 1 0 14.3V1.2A1.2 1.2 0 0 1 1.2 0Z" fill="#74d8e6"/><rect x="5.3" y="5.3" width="2.6" height="2.6" fill="#fff"/><rect x="5.3" y="8.8" width="2.6" height="2.6" fill="#fff"/><rect x="5.3" y="12.3" width="2.6" height="2.6" fill="#fff"/><rect x="8.8" y="5.3" width="2.6" height="2.6" fill="#fff"/><rect x="8.8" y="8.8" width="2.6" height="2.6" fill="#fff"/><rect x="8.8" y="12.3" width="2.6" height="2.6" fill="#fff"/><rect x="12.3" y="5.3" width="2.6" height="2.6" fill="#fff"/><rect x="12.3" y="8.8" width="2.6" height="2.6" fill="#fff"/><rect x="12.3" y="12.3" width="2.6" height="2.6" fill="#fff"/></svg>
<div class="t" style="left:64.60px;top:706px;letter-spacing:0.122px;">roleuploadratelimit</div>
<div class="ab" style="left:453px;top:703px;width:10px;height:19px;background:#e8e8e8;border:1px solid #b9b9b9;border-radius:2.5px"></div>
<div class="t" style="left:481.40px;top:706px;letter-spacing:-0.729px;color:#666">32,0 KiB</div>
<div class="ab" style="left:36px;top:733px;width:4px;height:1px;background:repeating-linear-gradient(90deg,#a0a0a0 0 1px,transparent 1px 2px)"></div>
<svg style="left:40px;top:726px" width="16" height="16" viewBox="0 0 16 16"><rect x="0" y="0" width="15.5" height="15.5" rx="1.2" fill="#d3e8fb"/><path d="M1.2 0H14.3A1.2 1.2 0 0 1 15.5 1.2V4.6H4.6V15.5H1.2A1.2 1.2 0 0 1 0 14.3V1.2A1.2 1.2 0 0 1 1.2 0Z" fill="#74d8e6"/><rect x="5.3" y="5.3" width="2.6" height="2.6" fill="#fff"/><rect x="5.3" y="8.8" width="2.6" height="2.6" fill="#fff"/><rect x="5.3" y="12.3" width="2.6" height="2.6" fill="#fff"/><rect x="8.8" y="5.3" width="2.6" height="2.6" fill="#fff"/><rect x="8.8" y="8.8" width="2.6" height="2.6" fill="#fff"/><rect x="8.8" y="12.3" width="2.6" height="2.6" fill="#fff"/><rect x="12.3" y="5.3" width="2.6" height="2.6" fill="#fff"/><rect x="12.3" y="8.8" width="2.6" height="2.6" fill="#fff"/><rect x="12.3" y="12.3" width="2.6" height="2.6" fill="#fff"/></svg>
<div class="t" style="left:64.60px;top:727px;letter-spacing:-0.150px;">seafileconf</div>
<div class="ab" style="left:453px;top:724px;width:5px;height:19px;background:#e8e8e8;border:1px solid #b9b9b9;border-radius:2.5px"></div>
<div class="t" style="left:481.40px;top:727px;letter-spacing:-0.729px;color:#666">16,0 KiB</div>
<div class="ab" style="left:36px;top:754px;width:4px;height:1px;background:repeating-linear-gradient(90deg,#a0a0a0 0 1px,transparent 1px 2px)"></div>
<svg style="left:40px;top:747px" width="16" height="16" viewBox="0 0 16 16"><rect x="0" y="0" width="15.5" height="15.5" rx="1.2" fill="#d3e8fb"/><path d="M1.2 0H14.3A1.2 1.2 0 0 1 15.5 1.2V4.6H4.6V15.5H1.2A1.2 1.2 0 0 1 0 14.3V1.2A1.2 1.2 0 0 1 1.2 0Z" fill="#74d8e6"/><rect x="5.3" y="5.3" width="2.6" height="2.6" fill="#fff"/><rect x="5.3" y="8.8" width="2.6" height="2.6" fill="#fff"/><rect x="5.3" y="12.3" width="2.6" height="2.6" fill="#fff"/><rect x="8.8" y="5.3" width="2.6" height="2.6" fill="#fff"/><rect x="8.8" y="8.8" width="2.6" height="2.6" fill="#fff"/><rect x="8.8" y="12.3" width="2.6" height="2.6" fill="#fff"/><rect x="12.3" y="5.3" width="2.6" height="2.6" fill="#fff"/><rect x="12.3" y="8.8" width="2.6" height="2.6" fill="#fff"/><rect x="12.3" y="12.3" width="2.6" height="2.6" fill="#fff"/></svg>
<div class="t" style="left:64.60px;top:748px;letter-spacing:-0.333px;">sharedrepo</div>
<div class="ab" style="left:453px;top:745px;width:20px;height:19px;background:#e8e8e8;border:1px solid #b9b9b9;border-radius:2.5px"></div>
<div class="t" style="left:481.40px;top:748px;letter-spacing:-0.729px;color:#666">64,0 KiB</div>
<div class="ab" style="left:36px;top:775px;width:4px;height:1px;background:repeating-linear-gradient(90deg,#a0a0a0 0 1px,transparent 1px 2px)"></div>
<svg style="left:40px;top:768px" width="16" height="16" viewBox="0 0 16 16"><rect x="0" y="0" width="15.5" height="15.5" rx="1.2" fill="#d3e8fb"/><path d="M1.2 0H14.3A1.2 1.2 0 0 1 15.5 1.2V4.6H4.6V15.5H1.2A1.2 1.2 0 0 1 0 14.3V1.2A1.2 1.2 0 0 1 1.2 0Z" fill="#74d8e6"/><rect x="5.3" y="5.3" width="2.6" height="2.6" fill="#fff"/><rect x="5.3" y="8.8" width="2.6" height="2.6" fill="#fff"/><rect x="5.3" y="12.3" width="2.6" height="2.6" fill="#fff"/><rect x="8.8" y="5.3" width="2.6" height="2.6" fill="#fff"/><rect x="8.8" y="8.8" width="2.6" height="2.6" fill="#fff"/><rect x="8.8" y="12.3" width="2.6" height="2.6" fill="#fff"/><rect x="12.3" y="5.3" width="2.6" height="2.6" fill="#fff"/><rect x="12.3" y="8.8" width="2.6" height="2.6" fill="#fff"/><rect x="12.3" y="12.3" width="2.6" height="2.6" fill="#fff"/></svg>
<div class="t" style="left:64.60px;top:769px;letter-spacing:-0.067px;">systeminfo</div>
<div class="ab" style="left:453px;top:766px;width:5px;height:19px;background:#e8e8e8;border:1px solid #b9b9b9;border-radius:2.5px"></div>
<div class="t" style="left:481.40px;top:769px;letter-spacing:-0.729px;color:#666">16,0 KiB</div>
<div class="ab" style="left:36px;top:796px;width:4px;height:1px;background:repeating-linear-gradient(90deg,#a0a0a0 0 1px,transparent 1px 2px)"></div>
<svg style="left:40px;top:789px" width="16" height="16" viewBox="0 0 16 16"><rect x="0" y="0" width="15.5" height="15.5" rx="1.2" fill="#d3e8fb"/><path d="M1.2 0H14.3A1.2 1.2 0 0 1 15.5 1.2V4.6H4.6V15.5H1.2A1.2 1.2 0 0 1 0 14.3V1.2A1.2 1.2 0 0 1 1.2 0Z" fill="#74d8e6"/><rect x="5.3" y="5.3" width="2.6" height="2.6" fill="#fff"/><rect x="5.3" y="8.8" width="2.6" height="2.6" fill="#fff"/><rect x="5.3" y="12.3" width="2.6" height="2.6" fill="#fff"/><rect x="8.8" y="5.3" width="2.6" height="2.6" fill="#fff"/><rect x="8.8" y="8.8" width="2.6" height="2.6" fill="#fff"/><rect x="8.8" y="12.3" width="2.6" height="2.6" fill="#fff"/><rect x="12.3" y="5.3" width="2.6" height="2.6" fill="#fff"/><rect x="12.3" y="8.8" width="2.6" height="2.6" fill="#fff"/><rect x="12.3" y="12.3" width="2.6" height="2.6" fill="#fff"/></svg>
<div class="t" style="left:64.60px;top:790px;letter-spacing:0.075px;">userdownloadratelimit</div>
<div class="ab" style="left:453px;top:787px;width:10px;height:19px;background:#e8e8e8;border:1px solid #b9b9b9;border-radius:2.5px"></div>
<div class="t" style="left:481.40px;top:790px;letter-spacing:-0.729px;color:#666">32,0 KiB</div>
<div class="ab" style="left:36px;top:817px;width:4px;height:1px;background:repeating-linear-gradient(90deg,#a0a0a0 0 1px,transparent 1px 2px)"></div>
<svg style="left:40px;top:810px" width="16" height="16" viewBox="0 0 16 16"><rect x="0" y="0" width="15.5" height="15.5" rx="1.2" fill="#d3e8fb"/><path d="M1.2 0H14.3A1.2 1.2 0 0 1 15.5 1.2V4.6H4.6V15.5H1.2A1.2 1.2 0 0 1 0 14.3V1.2A1.2 1.2 0 0 1 1.2 0Z" fill="#74d8e6"/><rect x="5.3" y="5.3" width="2.6" height="2.6" fill="#fff"/><rect x="5.3" y="8.8" width="2.6" height="2.6" fill="#fff"/><rect x="5.3" y="12.3" width="2.6" height="2.6" fill="#fff"/><rect x="8.8" y="5.3" width="2.6" height="2.6" fill="#fff"/><rect x="8.8" y="8.8" width="2.6" height="2.6" fill="#fff"/><rect x="8.8" y="12.3" width="2.6" height="2.6" fill="#fff"/><rect x="12.3" y="5.3" width="2.6" height="2.6" fill="#fff"/><rect x="12.3" y="8.8" width="2.6" height="2.6" fill="#fff"/><rect x="12.3" y="12.3" width="2.6" height="2.6" fill="#fff"/></svg>
<div class="t" style="left:64.60px;top:811px;letter-spacing:-0.200px;">userquota</div>
<div class="ab" style="left:453px;top:808px;width:10px;height:19px;background:#e8e8e8;border:1px solid #b9b9b9;border-radius:2.5px"></div>
<div class="t" style="left:481.40px;top:811px;letter-spacing:-0.729px;color:#666">32,0 KiB</div>
<div class="ab" style="left:36px;top:838px;width:4px;height:1px;background:repeating-linear-gradient(90deg,#a0a0a0 0 1px,transparent 1px 2px)"></div>
<svg style="left:40px;top:831px" width="16" height="16" viewBox="0 0 16 16"><rect x="0" y="0" width="15.5" height="15.5" rx="1.2" fill="#d3e8fb"/><path d="M1.2 0H14.3A1.2 1.2 0 0 1 15.5 1.2V4.6H4.6V15.5H1.2A1.2 1.2 0 0 1 0 14.3V1.2A1.2 1.2 0 0 1 1.2 0Z" fill="#74d8e6"/><rect x="5.3" y="5.3" width="2.6" height="2.6" fill="#fff"/><rect x="5.3" y="8.8" width="2.6" height="2.6" fill="#fff"/><rect x="5.3" y="12.3" width="2.6" height="2.6" fill="#fff"/><rect x="8.8" y="5.3" width="2.6" height="2.6" fill="#fff"/><rect x="8.8" y="8.8" width="2.6" height="2.6" fill="#fff"/><rect x="8.8" y="12.3" width="2.6" height="2.6" fill="#fff"/><rect x="12.3" y="5.3" width="2.6" height="2.6" fill="#fff"/><rect x="12.3" y="8.8" width="2.6" height="2.6" fill="#fff"/><rect x="12.3" y="12.3" width="2.6" height="2.6" fill="#fff"/></svg>
<div class="t" style="left:64.60px;top:832px;letter-spacing:-0.254px;">usersharequota</div>
<div class="ab" style="left:453px;top:829px;width:10px;height:19px;background:#e8e8e8;border:1px solid #b9b9b9;border-radius:2.5px"></div>
<div class="t" style="left:481.40px;top:832px;letter-spacing:-0.729px;color:#666">32,0 KiB</div>
<div class="ab" style="left:36px;top:859px;width:4px;height:1px;background:repeating-linear-gradient(90deg,#a0a0a0 0 1px,transparent 1px 2px)"></div>
<svg style="left:40px;top:852px" width="16" height="16" viewBox="0 0 16 16"><rect x="0" y="0" width="15.5" height="15.5" rx="1.2" fill="#d3e8fb"/><path d="M1.2 0H14.3A1.2 1.2 0 0 1 15.5 1.2V4.6H4.6V15.5H1.2A1.2 1.2 0 0 1 0 14.3V1.2A1.2 1.2 0 0 1 1.2 0Z" fill="#74d8e6"/><rect x="5.3" y="5.3" width="2.6" height="2.6" fill="#fff"/><rect x="5.3" y="8.8" width="2.6" height="2.6" fill="#fff"/><rect x="5.3" y="12.3" width="2.6" height="2.6" fill="#fff"/><rect x="8.8" y="5.3" width="2.6" height="2.6" fill="#fff"/><rect x="8.8" y="8.8" width="2.6" height="2.6" fill="#fff"/><rect x="8.8" y="12.3" width="2.6" height="2.6" fill="#fff"/><rect x="12.3" y="5.3" width="2.6" height="2.6" fill="#fff"/><rect x="12.3" y="8.8" width="2.6" height="2.6" fill="#fff"/><rect x="12.3" y="12.3" width="2.6" height="2.6" fill="#fff"/></svg>
<div class="t" style="left:64.60px;top:853px;letter-spacing:0.039px;">useruploadratelimit</div>
<div class="ab" style="left:453px;top:850px;width:10px;height:19px;background:#e8e8e8;border:1px solid #b9b9b9;border-radius:2.5px"></div>
<div class="t" style="left:481.40px;top:853px;letter-spacing:-0.729px;color:#666">32,0 KiB</div>
<div class="ab" style="left:36px;top:880px;width:4px;height:1px;background:repeating-linear-gradient(90deg,#a0a0a0 0 1px,transparent 1px 2px)"></div>
<svg style="left:40px;top:873px" width="16" height="16" viewBox="0 0 16 16"><rect x="0" y="0" width="15.5" height="15.5" rx="1.2" fill="#d3e8fb"/><path d="M1.2 0H14.3A1.2 1.2 0 0 1 15.5 1.2V4.6H4.6V15.5H1.2A1.2 1.2 0 0 1 0 14.3V1.2A1.2 1.2 0 0 1 1.2 0Z" fill="#74d8e6"/><rect x="5.3" y="5.3" width="2.6" height="2.6" fill="#fff"/><rect x="5.3" y="8.8" width="2.6" height="2.6" fill="#fff"/><rect x="5.3" y="12.3" width="2.6" height="2.6" fill="#fff"/><rect x="8.8" y="5.3" width="2.6" height="2.6" fill="#fff"/><rect x="8.8" y="8.8" width="2.6" height="2.6" fill="#fff"/><rect x="8.8" y="12.3" width="2.6" height="2.6" fill="#fff"/><rect x="12.3" y="5.3" width="2.6" height="2.6" fill="#fff"/><rect x="12.3" y="8.8" width="2.6" height="2.6" fill="#fff"/><rect x="12.3" y="12.3" width="2.6" height="2.6" fill="#fff"/></svg>
<div class="t" style="left:64.60px;top:874px;">virtualrepo</div>
<div class="ab" style="left:453px;top:871px;width:15px;height:19px;background:#e8e8e8;border:1px solid #b9b9b9;border-radius:2.5px"></div>
<div class="t" style="left:481.40px;top:874px;letter-spacing:-0.729px;color:#666">48,0 KiB</div>
<div class="ab" style="left:36px;top:901px;width:4px;height:1px;background:repeating-linear-gradient(90deg,#a0a0a0 0 1px,transparent 1px 2px)"></div>
<svg style="left:40px;top:894px" width="16" height="16" viewBox="0 0 16 16"><rect x="0" y="0" width="15.5" height="15.5" rx="1.2" fill="#d3e8fb"/><path d="M1.2 0H14.3A1.2 1.2 0 0 1 15.5 1.2V4.6H4.6V15.5H1.2A1.2 1.2 0 0 1 0 14.3V1.2A1.2 1.2 0 0 1 1.2 0Z" fill="#74d8e6"/><rect x="5.3" y="5.3" width="2.6" height="2.6" fill="#fff"/><rect x="5.3" y="8.8" width="2.6" height="2.6" fill="#fff"/><rect x="5.3" y="12.3" width="2.6" height="2.6" fill="#fff"/><rect x="8.8" y="5.3" width="2.6" height="2.6" fill="#fff"/><rect x="8.8" y="8.8" width="2.6" height="2.6" fill="#fff"/><rect x="8.8" y="12.3" width="2.6" height="2.6" fill="#fff"/><rect x="12.3" y="5.3" width="2.6" height="2.6" fill="#fff"/><rect x="12.3" y="8.8" width="2.6" height="2.6" fill="#fff"/><rect x="12.3" y="12.3" width="2.6" height="2.6" fill="#fff"/></svg>
<div class="t" style="left:64.70px;top:895px;letter-spacing:-0.325px;">webap</div>
<div class="ab" style="left:453px;top:892px;width:10px;height:19px;background:#e8e8e8;border:1px solid #b9b9b9;border-radius:2.5px"></div>
<div class="t" style="left:481.40px;top:895px;letter-spacing:-0.729px;color:#666">32,0 KiB</div>
<div class="ab" style="left:36px;top:922px;width:4px;height:1px;background:repeating-linear-gradient(90deg,#a0a0a0 0 1px,transparent 1px 2px)"></div>
<svg style="left:40px;top:915px" width="16" height="16" viewBox="0 0 16 16"><rect x="0" y="0" width="15.5" height="15.5" rx="1.2" fill="#d3e8fb"/><path d="M1.2 0H14.3A1.2 1.2 0 0 1 15.5 1.2V4.6H4.6V15.5H1.2A1.2 1.2 0 0 1 0 14.3V1.2A1.2 1.2 0 0 1 1.2 0Z" fill="#74d8e6"/><rect x="5.3" y="5.3" width="2.6" height="2.6" fill="#fff"/><rect x="5.3" y="8.8" width="2.6" height="2.6" fill="#fff"/><rect x="5.3" y="12.3" width="2.6" height="2.6" fill="#fff"/><rect x="8.8" y="5.3" width="2.6" height="2.6" fill="#fff"/><rect x="8.8" y="8.8" width="2.6" height="2.6" fill="#fff"/><rect x="8.8" y="12.3" width="2.6" height="2.6" fill="#fff"/><rect x="12.3" y="5.3" width="2.6" height="2.6" fill="#fff"/><rect x="12.3" y="8.8" width="2.6" height="2.6" fill="#fff"/><rect x="12.3" y="12.3" width="2.6" height="2.6" fill="#fff"/></svg>
<div class="t" style="left:64.70px;top:916px;letter-spacing:0.035px;">webuploadtempfiles</div>
<div class="ab" style="left:453px;top:913px;width:29px;height:19px;background:#e8e8e8;border:1px solid #b9b9b9;border-radius:2.5px"></div>
<div class="t" style="left:481.40px;top:916px;letter-spacing:-0.729px;color:#666">96,0 KiB</div>
<svg style="left:20px;top:939px" width="6" height="10" viewBox="0 0 6 10"><path d="M0.8 1L4.8 5L0.8 9" fill="none" stroke="#6e6e6e" stroke-width="1.3"/></svg>
<svg style="left:29px;top:936px" width="15" height="16" viewBox="0 0 15 16"><rect x="0" y="0" width="14.5" height="4.5" rx="1" fill="#e4dcf3"/><rect x="0" y="5.5" width="14.5" height="4.5" rx="1" fill="#e4dcf3"/><rect x="0" y="11" width="14.5" height="4.5" rx="1" fill="#e4dcf3"/></svg>
<div class="t" style="left:51.90px;top:937px;letter-spacing:-0.200px;">seafile-seahub</div>
<div class="ab" style="left:536px;top:72px;width:93px;height:19px;background:#f0f0f0;border:1px solid #e0e0e0;border-bottom:none"></div>
<div class="ab" style="left:628px;top:72px;width:160px;height:19px;background:#f0f0f0;border:1px solid #e0e0e0;border-bottom:none"></div>
<div class="ab" style="left:787px;top:72px;width:130px;height:19px;background:#f0f0f0;border:1px solid #e0e0e0;border-bottom:none"></div>
<div class="ab" style="left:916px;top:72px;width:78px;height:19px;background:#f0f0f0;border:1px solid #e0e0e0;border-bottom:none"></div>
<div class="ab" style="left:993px;top:70px;width:82px;height:25px;background:#f8f8f8;border:1px solid #e3e3e3;border-bottom:none"></div>
<svg style="left:545px;top:73px" width="10" height="16" viewBox="0 0 10 16"><rect x="0" y="0" width="9.5" height="16" rx="0.8" fill="#2f8fe6"/><rect x="1" y="1" width="7.5" height="2.2" fill="#2a4a63"/><rect x="1" y="4" width="7.5" height="2.2" fill="#2a4a63"/><rect x="1" y="7" width="7.5" height="2.2" fill="#2a4a63"/><rect x="7" y="1.6" width="1" height="1" fill="#7ad04e"/><rect x="7" y="4.6" width="1" height="1" fill="#7ad04e"/><rect x="7" y="7.6" width="1" height="1" fill="#7ad04e"/><rect x="4" y="13" width="1.5" height="1" fill="#cfe6fb"/></svg>
<div class="t" style="left:564.60px;top:75px;letter-spacing:-0.440px;">NAS seafile</div>
<svg style="left:637px;top:74px" width="15" height="16" viewBox="0 0 15 16"><rect x="0" y="0" width="14.5" height="4.5" rx="1" fill="#d9cff0"/><rect x="0" y="5.5" width="14.5" height="4.5" rx="1" fill="#d9cff0"/><rect x="0" y="11" width="14.5" height="4.5" rx="1" fill="#d9cff0"/></svg>
<div class="t" style="left:657.30px;top:75px;letter-spacing:-0.264px;">База данных: seafile-db</div>
<svg style="left:794px;top:73px" width="16" height="16" viewBox="0 0 16 16"><rect x="0" y="0" width="15.5" height="15.5" rx="1.2" fill="#b9dcfa"/><path d="M1.2 0H14.3A1.2 1.2 0 0 1 15.5 1.2V4.6H4.6V15.5H1.2A1.2 1.2 0 0 1 0 14.3V1.2A1.2 1.2 0 0 1 1.2 0Z" fill="#1fbcd2"/><rect x="5.3" y="5.3" width="2.6" height="2.6" fill="#fff"/><rect x="5.3" y="8.8" width="2.6" height="2.6" fill="#fff"/><rect x="5.3" y="12.3" width="2.6" height="2.6" fill="#fff"/><rect x="8.8" y="5.3" width="2.6" height="2.6" fill="#fff"/><rect x="8.8" y="8.8" width="2.6" height="2.6" fill="#fff"/><rect x="8.8" y="12.3" width="2.6" height="2.6" fill="#fff"/><rect x="12.3" y="5.3" width="2.6" height="2.6" fill="#fff"/><rect x="12.3" y="8.8" width="2.6" height="2.6" fill="#fff"/><rect x="12.3" y="12.3" width="2.6" height="2.6" fill="#fff"/></svg>
<div class="t" style="left:816.00px;top:75px;letter-spacing:-0.020px;">Таблица: orgrepo</div>
<svg style="left:923px;top:73px" width="16" height="16" viewBox="0 0 16 16"><rect x="0.5" y="0.5" width="15" height="15" rx="2" fill="#8ec9f7"/><rect x="2.0" y="2.0" width="3" height="3" fill="#fff"/><rect x="2.0" y="6.2" width="3" height="3" fill="#fff"/><rect x="2.0" y="10.4" width="3" height="3" fill="#fff"/><rect x="6.2" y="2.0" width="3" height="3" fill="#fff"/><rect x="6.2" y="6.2" width="3" height="3" fill="#fff"/><rect x="6.2" y="10.4" width="3" height="3" fill="#fff"/><rect x="10.4" y="2.0" width="3" height="3" fill="#fff"/><rect x="10.4" y="6.2" width="3" height="3" fill="#fff"/><rect x="10.4" y="10.4" width="3" height="3" fill="#fff"/></svg>
<div class="t" style="left:945.30px;top:75px;letter-spacing:-0.140px;">Данные</div>
<svg style="left:1000px;top:72px" width="15" height="15" viewBox="0 0 15 15"><path d="M0 0L15 7.3L0 14.6Z" fill="#2196f3"/></svg>
<div class="t" style="left:1021.90px;top:73px;letter-spacing:0.067px;">Запрос*</div>
<svg style="left:1079px;top:73px" width="17" height="16" viewBox="0 0 17 16"><rect x="0.5" y="0.5" width="13" height="13" rx="1.5" fill="#e3f1fd" stroke="#8ec9f7"/><rect x="2.5" y="3" width="6" height="1" fill="#777"/><rect x="2.5" y="5" width="9" height="1" fill="#bbb"/><path d="M1 8H13M1 11H13M5 7V13M9 7V13" stroke="#8ec9f7" stroke-width="1"/><circle cx="12.5" cy="12" r="3.6" fill="#4caf50"/><path d="M12.5 10V14M10.5 12H14.5" stroke="#fff" stroke-width="1.3"/></svg>
<div class="ab" style="left:534px;top:91px;width:1384px;height:867px;background:#f8f8f8;border:1px solid #e3e3e3"></div>
<div class="ab" style="left:1711px;top:95px;width:6px;height:560px;background:#f0f0f0"></div>
<div class="ab" style="left:994px;top:91px;width:80px;height:1px;background:#f8f8f8"></div>
<div class="ab" style="left:538px;top:95px;width:1173px;height:560px;background:#fff;border-top:1px solid #e6e6e6;border-left:1px solid #e6e6e6;border-bottom:1px solid #7a7a7a"></div>
<div class="ab" style="left:540px;top:97px;width:47px;height:557px;background:#efefef"></div>
<div class="ab" style="left:1717px;top:95px;width:198px;height:560px;background:#fff;border-bottom:1px solid #7a7a7a"></div>
<div class="ab" style="left:1717px;top:95px;width:198px;height:23px;background:#fff;border-bottom:1px solid #6a6a6a"></div>
<svg style="left:1718px;top:97px" width="17" height="17" viewBox="0 0 17 17"><circle cx="6.5" cy="6.5" r="5.3" fill="#64b5f6" stroke="#5f6b73" stroke-width="1.4"/><path d="M4 4.5A3 3 0 0 1 7 3" stroke="#d8ecfb" stroke-width="1" fill="none"/><path d="M10.3 10.3L15 15" stroke="#5f6b73" stroke-width="2"/></svg>
<div class="t" style="left:1737.50px;top:99px;letter-spacing:-0.278px;color:#666">Filter ...</div>
<svg style="left:1727px;top:123px" width="6" height="10" viewBox="0 0 6 10"><path d="M0.8 1L4.8 5L0.8 9" fill="none" stroke="#6e6e6e" stroke-width="1.3"/></svg>
<div class="t" style="left:1763.00px;top:122px;letter-spacing:-0.150px;">Столбцы</div>
<svg style="left:1727px;top:140px" width="6" height="10" viewBox="0 0 6 10"><path d="M0.8 1L4.8 5L0.8 9" fill="none" stroke="#6e6e6e" stroke-width="1.3"/></svg>
<div class="t" style="left:1763.00px;top:139px;letter-spacing:-0.300px;">Функции SQL</div>
<svg style="left:1727px;top:157px" width="6" height="10" viewBox="0 0 6 10"><path d="M0.8 1L4.8 5L0.8 9" fill="none" stroke="#6e6e6e" stroke-width="1.3"/></svg>
<div class="t" style="left:1763.00px;top:156px;letter-spacing:-0.294px;">Ключевые слова SQL</div>
<svg style="left:1727px;top:174px" width="6" height="10" viewBox="0 0 6 10"><path d="M0.8 1L4.8 5L0.8 9" fill="none" stroke="#6e6e6e" stroke-width="1.3"/></svg>
<div class="t" style="left:1763.00px;top:173px;letter-spacing:-0.025px;">Заготовки</div>
<svg style="left:1727px;top:191px" width="6" height="10" viewBox="0 0 6 10"><path d="M0.8 1L4.8 5L0.8 9" fill="none" stroke="#6e6e6e" stroke-width="1.3"/></svg>
<div class="t" style="left:1763.00px;top:190px;letter-spacing:-0.073px;">История запросов</div>
<svg style="left:1727px;top:209px" width="6" height="10" viewBox="0 0 6 10"><path d="M0.8 1L4.8 5L0.8 9" fill="none" stroke="#6e6e6e" stroke-width="1.3"/></svg>
<div class="t" style="left:1779.00px;top:207px;letter-spacing:-0.090px;">Профилирование зап...</div>
<svg style="left:1727px;top:228px" width="6" height="10" viewBox="0 0 6 10"><path d="M0.8 1L4.8 5L0.8 9" fill="none" stroke="#6e6e6e" stroke-width="1.3"/></svg>
<div class="t" style="left:1779.00px;top:226px;letter-spacing:-0.106px;">Привязать параметры</div>
<svg style="left:1739px;top:121px" width="15" height="16" viewBox="0 0 15 16"><rect x="0" y="0" width="14.5" height="4.5" rx="1" fill="#d5c8ef"/><rect x="0" y="5.5" width="14.5" height="4.5" rx="1" fill="#d5c8ef"/><rect x="0" y="11" width="14.5" height="4.5" rx="1" fill="#d5c8ef"/></svg>
<svg style="left:1740px;top:138px" width="12" height="15" viewBox="0 0 12 15"><path d="M4.5 0H10L7 6H10.5L3 15L5 8H2Z" fill="#e91ee9"/></svg>
<svg style="left:1740px;top:155px" width="12" height="16" viewBox="0 0 12 16"><rect x="0.5" y="0.5" width="11" height="7.5" rx="2.5" fill="#f7a21b"/><rect x="3.5" y="2" width="5" height="1.8" rx="0.9" fill="#fff"/><path d="M4.5 7.5H7.5V14.5L6 16L4.5 14.5Z" fill="#f7a21b"/><rect x="7.2" y="10" width="2" height="1.5" fill="#f7a21b"/></svg>
<svg style="left:1738px;top:173px" width="16" height="13" viewBox="0 0 16 13"><path d="M0 1.5A1.5 1.5 0 0 1 1.5 0H6L7.5 1.5H14.5A1.5 1.5 0 0 1 16 3V11.5A1.5 1.5 0 0 1 14.5 13H1.5A1.5 1.5 0 0 1 0 11.5Z" fill="#ffca28"/></svg>
<svg style="left:1738px;top:189px" width="16" height="16" viewBox="0 0 16 16"><circle cx="8" cy="8" r="6.9" fill="#f0eeee" stroke="#1fb3c8" stroke-width="2"/><path d="M8 2.6V3.8M8 12.2V13.4M2.6 8H3.8M12.2 8H13.4" stroke="#c8c8c8" stroke-width="1"/><path d="M8 3.4V8.2L10.6 10.6" stroke="#222" stroke-width="1.2" fill="none"/><circle cx="8" cy="8.2" r="1.1" fill="#222"/></svg>
<div class="ab" style="left:1740px;top:208px;width:13px;height:13px;border:1px solid #555;border-radius:3px;background:#f2f2f2"></div>
<svg style="left:1755px;top:206px" width="16" height="16" viewBox="0 0 16 16"><rect x="0" y="2.8" width="4" height="12.8" fill="#1ec0d6"/><rect x="6" y="7" width="4" height="8.6" fill="#1ec0d6"/><rect x="11.5" y="0" width="4.5" height="15.6" fill="#1ec0d6"/></svg>
<div class="ab" style="left:1740px;top:227px;width:13px;height:13px;border:1px solid #555;border-radius:3px;background:#f2f2f2"></div>
<svg style="left:1755px;top:227px" width="16" height="12" viewBox="0 0 16 12"><path d="M4.5 2L1 6L4.5 10M11.5 2L15 6L11.5 10" stroke="#3f51b5" stroke-width="1.3" fill="none"/><path d="M9.5 1L6.5 11" stroke="#2196f3" stroke-width="1.3"/></svg>
<div class="ab" style="left:538px;top:655px;width:1379px;height:28px;background:#efefef;border-bottom:1px solid #909090"></div>
<div class="ab" style="left:1px;top:963px;width:1918px;height:50px;background:#fff;border-bottom:1px solid #7a7a7a"></div>
<div class="ab" style="left:2px;top:964px;width:47px;height:48px;background:#efefef"></div>
<div class="ab" style="left:1902px;top:965px;width:16px;height:45px;background:#efefef"></div>
<div class="mono ab" style="left:543px;top:98px;width:27px;text-align:right;color:#7f7f7f">1</div>
<div class="mono ab" style="left:591px;top:98px"><span class="kw">CREATE</span> <span class="kw">TABLE</span> <span class="fn">IF</span> <span class="kw">NOT</span> <span class="kw">EXISTS</span> <span class="tbl">OrgRepo</span> <span class="sym">(</span></div>
<div class="mono ab" style="left:543px;top:112px;width:27px;text-align:right;color:#7f7f7f">2</div>
<div class="mono ab" style="left:591px;top:112px">  <span class="fld">id</span> <span class="dt">BIGINT</span> <span class="kw">NOT</span> <span class="kw">NULL</span> <span class="kw">PRIMARY</span> <span class="kw">KEY</span> <span class="kw">AUTO_INCREMENT</span><span class="sym">,</span></div>
<div class="mono ab" style="left:543px;top:126px;width:27px;text-align:right;color:#7f7f7f">3</div>
<div class="mono ab" style="left:591px;top:126px">  <span class="fld">org_id</span> <span class="dt">INTEGER</span><span class="sym">,</span></div>
<div class="mono ab" style="left:543px;top:140px;width:27px;text-align:right;color:#7f7f7f">4</div>
<div class="mono ab" style="left:591px;top:140px">  <span class="fld">repo_id</span> <span class="dt">CHAR</span><span class="sym">(</span><span class="num">37</span><span class="sym">)</span><span class="sym">,</span></div>
<div class="mono ab" style="left:543px;top:154px;width:27px;text-align:right;color:#7f7f7f">5</div>
<div class="mono ab" style="left:591px;top:154px">  <span class="fn">user</span> <span class="dt">VARCHAR</span><span class="sym">(</span><span class="num">255</span><span class="sym">)</span><span class="sym">,</span></div>
<div class="mono ab" style="left:543px;top:168px;width:27px;text-align:right;color:#7f7f7f">6</div>
<div class="mono ab" style="left:591px;top:168px">  <span class="kw">UNIQUE</span> <span class="kw">INDEX</span><span class="sym">(</span><span class="fld">org_id</span><span class="sym">,</span> <span class="fld">repo_id</span><span class="sym">)</span><span class="sym">,</span></div>
<div class="mono ab" style="left:543px;top:182px;width:27px;text-align:right;color:#7f7f7f">7</div>
<div class="mono ab" style="left:591px;top:182px">  <span class="kw">UNIQUE</span> <span class="kw">INDEX</span> <span class="sym">(</span><span class="fld">repo_id</span><span class="sym">)</span><span class="sym">,</span></div>
<div class="mono ab" style="left:543px;top:196px;width:27px;text-align:right;color:#7f7f7f">8</div>
<div class="mono ab" style="left:591px;top:196px">  <span class="kw">INDEX</span> <span class="sym">(</span><span class="fld">org_id</span><span class="sym">,</span> <span class="fn">user</span><span class="sym">)</span><span class="sym">,</span></div>
<div class="mono ab" style="left:543px;top:210px;width:27px;text-align:right;color:#7f7f7f">9</div>
<div class="mono ab" style="left:591px;top:210px">  <span class="kw">INDEX</span><span class="sym">(</span><span class="fn">user</span><span class="sym">)</span></div>
<div class="mono ab" style="left:543px;top:224px;width:27px;text-align:right;color:#7f7f7f">10</div>
<div class="mono ab" style="left:591px;top:224px"><span class="sym">)</span> <span class="kw">ENGINE</span><span class="sym">=</span><span class="dt">INNODB</span><span class="sym">;</span></div>
<div class="mono ab" style="left:543px;top:238px;width:27px;text-align:right;color:#7f7f7f">11</div>
<div class="ab" style="left:588px;top:97px;width:1px;height:557px;background:#f0f0f0"></div>
<div class="ab" style="left:590px;top:237px;width:2px;height:12px;background:#000"></div>
<div class="mono ab" style="left:4px;top:966px;width:28px;text-align:right;color:#7f7f7f">192</div>
<div class="mono ab" style="left:53px;top:966px"><span class="kw">SHOW</span> <span class="kw">PROCEDURE</span> <span class="kw">STATUS</span> <span class="kw">WHERE</span> <span class="fld">`Db`</span><span class="sym">=</span><span class="str">&#x27;seafile-db&#x27;</span><span class="sym">;</span></div>
<div class="mono ab" style="left:4px;top:980px;width:28px;text-align:right;color:#7f7f7f">193</div>
<div class="mono ab" style="left:53px;top:980px"><span class="kw">SHOW</span> <span class="kw">TRIGGERS</span> <span class="kw">FROM</span> <span class="fld">`seafile-db`</span><span class="sym">;</span></div>
<div class="mono ab" style="left:4px;top:994px;width:28px;text-align:right;color:#7f7f7f">194</div>
<div class="mono ab" style="left:53px;top:994px"><span class="kw">SELECT</span> <span class="sym">*</span><span class="sym">,</span> <span class="fld">EVENT_SCHEMA</span> <span class="kw">AS</span> <span class="fld">`Db`</span><span class="sym">,</span> <span class="fld">EVENT_NAME</span> <span class="kw">AS</span> <span class="fld">`Name`</span> <span class="kw">FROM</span> <span class="fld">information_schema</span><span class="sym">.</span><span class="fld">`EVENTS`</span> <span class="kw">WHERE</span> <span class="fld">`EVENT_SCHEMA`</span><span class="sym">=</span><span class="str">&#x27;seafile-db&#x27;</span><span class="sym">;</span></div>
<div class="ab" style="left:50px;top:964px;width:1px;height:48px;background:#f0f0f0"></div>
<div class="ab" style="left:840px;top:1016px;width:1px;height:16px;background:#d0d0d0"></div>
<div class="ab" style="left:972px;top:1016px;width:1px;height:16px;background:#d0d0d0"></div>
<div class="ab" style="left:1153px;top:1016px;width:1px;height:16px;background:#d0d0d0"></div>
<div class="ab" style="left:1326px;top:1016px;width:1px;height:16px;background:#d0d0d0"></div>
<div class="ab" style="left:1499px;top:1016px;width:1px;height:16px;background:#d0d0d0"></div>
<div class="ab" style="left:1658px;top:1016px;width:1px;height:16px;background:#d0d0d0"></div>
<div class="t" style="left:994.00px;top:1017px;letter-spacing:-0.089px;">Подключено: 00:06 h</div>
<div class="t" style="left:1175.00px;top:1017px;letter-spacing:-0.346px;">MariaDB 11.8.5</div>
<div class="t" style="left:1331.00px;top:1017px;letter-spacing:-0.271px;">Время работы: 1 дней, 01:04 h</div>
<div class="t" style="left:1521.00px;top:1017px;letter-spacing:-0.267px;">Серверное время: 22:47</div>
<div class="t" style="left:1680.50px;top:1017px;letter-spacing:-0.200px;">Ожидание.</div>
<svg style="left:4px;top:47px" width="3" height="3" viewBox="0 0 3 3"><path d="M2 0V2H0Z" fill="#8c8c8c"/><path d="M3 1V3H1Z" fill="#fff"/></svg><svg style="left:4px;top:51px" width="3" height="3" viewBox="0 0 3 3"><path d="M2 0V2H0Z" fill="#8c8c8c"/><path d="M3 1V3H1Z" fill="#fff"/></svg><svg style="left:4px;top:55px" width="3" height="3" viewBox="0 0 3 3"><path d="M2 0V2H0Z" fill="#8c8c8c"/><path d="M3 1V3H1Z" fill="#fff"/></svg><svg style="left:4px;top:59px" width="3" height="3" viewBox="0 0 3 3"><path d="M2 0V2H0Z" fill="#8c8c8c"/><path d="M3 1V3H1Z" fill="#fff"/></svg><svg style="left:4px;top:63px" width="3" height="3" viewBox="0 0 3 3"><path d="M2 0V2H0Z" fill="#8c8c8c"/><path d="M3 1V3H1Z" fill="#fff"/></svg>
<svg style="left:1804px;top:47px" width="3" height="3" viewBox="0 0 3 3"><path d="M2 0V2H0Z" fill="#8c8c8c"/><path d="M3 1V3H1Z" fill="#fff"/></svg><svg style="left:1804px;top:51px" width="3" height="3" viewBox="0 0 3 3"><path d="M2 0V2H0Z" fill="#8c8c8c"/><path d="M3 1V3H1Z" fill="#fff"/></svg><svg style="left:1804px;top:55px" width="3" height="3" viewBox="0 0 3 3"><path d="M2 0V2H0Z" fill="#8c8c8c"/><path d="M3 1V3H1Z" fill="#fff"/></svg><svg style="left:1804px;top:59px" width="3" height="3" viewBox="0 0 3 3"><path d="M2 0V2H0Z" fill="#8c8c8c"/><path d="M3 1V3H1Z" fill="#fff"/></svg><svg style="left:1804px;top:63px" width="3" height="3" viewBox="0 0 3 3"><path d="M2 0V2H0Z" fill="#8c8c8c"/><path d="M3 1V3H1Z" fill="#fff"/></svg>
<svg style="left:18px;top:48px" width="16" height="16" viewBox="0 0 16 16"><g transform="translate(8 8) rotate(45) scale(0.92 0.95) translate(-5.5 -11)"><rect x="4.5" y="0" width="2" height="3.5" fill="#90a4ae"/><rect x="4.5" y="18.5" width="2" height="3.5" fill="#90a4ae"/><path d="M0.3 8.3C0.3 5 2.5 3.2 5.5 3.2C8.5 3.2 10.7 5 10.7 8.3Z" fill="#90a4ae"/><rect x="0" y="8.3" width="11" height="1.7" fill="#546e7a"/><rect x="0" y="10" width="11" height="1.2" fill="#cfd8dc"/><rect x="0" y="11.2" width="11" height="1.7" fill="#546e7a"/><path d="M0.3 12.9H10.7C10.7 16.2 8.5 18.6 5.5 18.6C2.5 18.6 0.3 16.2 0.3 12.9Z" fill="#90a4ae"/></g></svg>
<svg style="left:44px;top:54px" width="8" height="5" viewBox="0 0 8 5"><path d="M0 0H7.5L3.75 4.2Z" fill="#111"/></svg>
<svg style="left:58px;top:48px" width="16" height="16" viewBox="0 0 16 16"><g transform="translate(8 8) rotate(45) scale(0.92 0.95) translate(-5.5 -11)"><rect x="4.5" y="0" width="2" height="3.5" fill="#90a4ae"/><rect x="4.5" y="18.5" width="2" height="3.5" fill="#90a4ae"/><path d="M0.3 6.8C0.3 4.5 2.5 3 5.5 3C8.5 3 10.7 4.5 10.7 6.8Z" fill="#90a4ae"/><rect x="0" y="6.8" width="11" height="1.7" fill="#546e7a"/><rect x="2.3" y="8.5" width="1.6" height="5" fill="#ffc107"/><rect x="7.1" y="8.5" width="1.6" height="5" fill="#ffc107"/><rect x="0" y="13.5" width="11" height="1.7" fill="#546e7a"/><path d="M0.3 15.2H10.7C10.7 17.5 8.5 19 5.5 19C2.5 19 0.3 17.5 0.3 15.2Z" fill="#90a4ae"/></g></svg>
<div class="ab" style="left:80px;top:47px;width:1px;height:18px;background:#7a7a7a"></div>
<svg style="left:90px;top:48px" width="15" height="16" viewBox="0 0 15 16"><path d="M0 0H6L8 2V13H0Z" fill="#42a5f5"/><rect x="1.5" y="6" width="1.5" height="4" fill="#1e6fc0"/><path d="M4.5 4H10L14 7.5V16H4.5Z" fill="#90caf9"/><path d="M10 4V7.5H14Z" fill="#e3f2fd"/><rect x="6" y="9" width="6" height="1" fill="#4a90e2"/><rect x="6" y="11" width="6" height="1" fill="#4a90e2"/><rect x="6" y="13" width="4.5" height="1" fill="#4a90e2"/></svg>
<svg style="left:113px;top:48px" width="14" height="16" viewBox="0 0 14 16"><rect x="1" y="1.5" width="10" height="13" rx="1.3" fill="#fff" stroke="#546e7a" stroke-width="1.1"/><rect x="3.5" y="0.5" width="5" height="2" rx="0.8" fill="#90a4ae"/><rect x="5" y="5.5" width="8.5" height="10.5" fill="#90caf9"/><rect x="6.3" y="8" width="5.5" height="1" fill="#4a90e2"/><rect x="6.3" y="10" width="5.5" height="1" fill="#4a90e2"/><rect x="6.3" y="12" width="4" height="1" fill="#4a90e2"/></svg>
<svg style="left:135px;top:49px" width="16" height="15" viewBox="0 0 16 15"><path d="M0.5 5.5L6 0.5V3.3H9A6 6 0 0 1 9 15.3H6.5V11.5H9A2.3 2.3 0 0 0 9 7H6V10.5Z" fill="#00bcd4"/></svg>
<svg style="left:158px;top:48px" width="16" height="16" viewBox="0 0 16 16"><rect x="3" y="0.5" width="10" height="4" fill="#90caf9"/><rect x="0" y="3.5" width="16" height="9" rx="2" fill="#545454"/><rect x="12.5" y="5" width="1.3" height="1.3" fill="#4caf50"/><rect x="3" y="10" width="10" height="5.5" fill="#90caf9"/><rect x="4.5" y="12" width="6" height="1.3" fill="#4a90e2"/></svg>
<div class="ab" style="left:180px;top:47px;width:1px;height:18px;background:#7a7a7a"></div>
<svg style="left:193px;top:48px" width="16" height="16" viewBox="0 0 16 16"><circle cx="8" cy="8" r="8" fill="#7cb342"/><path d="M5.3 5.3A4 4 0 1 0 10.7 5.3" fill="none" stroke="#dcedc8" stroke-width="1.6"/><path d="M4 3.8H6.9V6.6Z" fill="#dcedc8"/></svg>
<svg style="left:219px;top:54px" width="8" height="5" viewBox="0 0 8 5"><path d="M0 0H7.5L3.75 4.2Z" fill="#111"/></svg>
<svg style="left:233px;top:49px" width="17" height="14" viewBox="0 0 17 14"><circle cx="4.8" cy="4.9" r="2.8" fill="#8d5a3b"/><ellipse cx="4.8" cy="5.9" rx="2.5" ry="2.4" fill="#f9a03f"/><path d="M0 14A4.8 4 0 0 1 9.6 14Z" fill="#4fc3f7"/><rect x="4" y="8" width="1.6" height="1.5" fill="#f57c00"/><circle cx="11.2" cy="3.2" r="2.8" fill="#37474f"/><ellipse cx="11.2" cy="4.2" rx="2.5" ry="2.4" fill="#f9a03f"/><path d="M6.4 12A4.8 4 0 0 1 16 12Z" fill="#2196f3"/><rect x="10.4" y="6.3" width="1.6" height="1.5" fill="#f57c00"/></svg>
<svg style="left:258px;top:48px" width="12" height="16" viewBox="0 0 12 16"><path d="M0 0H8.5L12 3.5V16H0Z" fill="#4db6ac"/><path d="M8.5 0V3.5H12Z" fill="#e0f2f1"/><text x="6" y="10.5" font-family="Liberation Sans" font-size="5" font-weight="bold" text-anchor="middle" fill="#00695c">csv</text></svg>
<svg style="left:279px;top:49px" width="16" height="14" viewBox="0 0 16 14"><rect x="0" y="2.8" width="11" height="2" rx="1" fill="#3f51b5"/><path d="M10 0L15.5 3.8L10 7.5Z" fill="#3f51b5"/><circle cx="3.5" cy="12" r="1.2" fill="#00bcd4"/><circle cx="8" cy="12" r="1.2" fill="#00bcd4"/><circle cx="12.5" cy="12" r="1.2" fill="#00bcd4"/></svg>
<div class="ab" style="left:301px;top:47px;width:1px;height:18px;background:#7a7a7a"></div>
<svg style="left:310px;top:48px" width="16" height="16" viewBox="0 0 16 16"><circle cx="8" cy="8" r="8" fill="#2196f3"/><text x="8" y="12.2" font-family="Liberation Sans" font-size="11" font-weight="bold" text-anchor="middle" fill="#fff">?</text></svg>
<svg style="left:334px;top:48px" width="14" height="16" viewBox="0 0 14 16"><rect x="0" y="0" width="4" height="16" fill="#878787"/><path d="M14 0V16L4 8Z" fill="#878787"/></svg>
<svg style="left:357px;top:48px" width="14" height="16" viewBox="0 0 14 16"><rect x="10" y="0" width="4" height="16" fill="#878787"/><path d="M0 0V16L10 8Z" fill="#878787"/></svg>
<svg style="left:379px;top:48px" width="16" height="16" viewBox="0 0 16 16"><circle cx="8" cy="8" r="8" fill="#8a8a8a"/><path d="M8 4V12M4 8H12" stroke="#fff" stroke-width="2.2"/></svg>
<svg style="left:402px;top:48px" width="16" height="16" viewBox="0 0 16 16"><circle cx="8" cy="8" r="8" fill="#666"/><path d="M5.3 5.3L10.7 10.7M10.7 5.3L5.3 10.7" stroke="#fff" stroke-width="1.9"/></svg>
<svg style="left:425px;top:48px" width="16" height="16" viewBox="0 0 16 16"><circle cx="8" cy="8" r="7.5" fill="#e3e3e3" stroke="#c2c2c2" stroke-width="1"/><path d="M4.2 8.4L6.8 10.8L11.5 5.3" fill="none" stroke="#9e9e9e" stroke-width="1.5"/></svg>
<svg style="left:448px;top:48px" width="16" height="16" viewBox="0 0 16 16"><path d="M1.5 1.5L14.5 14.5M14.5 1.5L1.5 14.5" stroke="#616161" stroke-width="2.5"/></svg>
<svg style="left:472px;top:48px" width="16" height="16" viewBox="0 0 16 16"><path d="M0 0.5L15.3 8L0 15.5Z" fill="#2196f3"/></svg>
<svg style="left:495px;top:54px" width="8" height="5" viewBox="0 0 8 5"><path d="M0 0H7.5L3.75 4.2Z" fill="#111"/></svg>
<svg style="left:510px;top:49px" width="16" height="14" viewBox="0 0 16 14"><path d="M0 1.5A1.5 1.5 0 0 1 1.5 0H5.5L7 1.3H14.5A1.5 1.5 0 0 1 16 2.8V11.5A1.5 1.5 0 0 1 14.5 13H1.5A1.5 1.5 0 0 1 0 11.5Z" fill="#ffa000"/><path d="M0 3.6A1 1 0 0 1 1 2.6H15A1 1 0 0 1 16 3.6V11.5A1.5 1.5 0 0 1 14.5 13H1.5A1.5 1.5 0 0 1 0 11.5Z" fill="#ffca28"/></svg>
<svg style="left:533px;top:54px" width="8" height="5" viewBox="0 0 8 5"><path d="M0 0H7.5L3.75 4.2Z" fill="#111"/></svg>
<svg style="left:547px;top:48px" width="16" height="16" viewBox="0 0 16 16"><path d="M0 1A1 1 0 0 1 1 0H13L16 3V15A1 1 0 0 1 15 16H1A1 1 0 0 1 0 15Z" fill="#1e88e5"/><rect x="3" y="0" width="9" height="6" fill="#cfd8dc"/><rect x="8.5" y="1" width="2" height="4" fill="#37474f"/><rect x="2" y="9" width="12" height="7" fill="#fff"/><rect x="3.5" y="11" width="9" height="1" fill="#ddd"/><rect x="3.5" y="13" width="9" height="1" fill="#ddd"/></svg>
<svg style="left:570px;top:48px" width="16" height="16" viewBox="0 0 16 16"><rect x="2" y="0.5" width="12" height="12" fill="#90caf9"/><path d="M0 12H10V15H1Z" fill="#42a5f5"/><path d="M9 9H15L16 10V16H9Z" fill="#1e88e5"/><rect x="10" y="12" width="5" height="3.5" fill="#fff"/><rect x="10.5" y="9.5" width="3.5" height="1.8" fill="#cfd8dc"/></svg>
<svg style="left:593px;top:48px" width="16" height="16" viewBox="0 0 16 16"><circle cx="6.3" cy="6.3" r="5.4" fill="#64b5f6" stroke="#555" stroke-width="1.4"/><path d="M4 4.2A3.2 3.2 0 0 1 8.6 4.2" stroke="#e3f2fd" stroke-width="0.9" fill="none"/><path d="M10.2 10.2L15 15" stroke="#555" stroke-width="1.8"/></svg>
<svg style="left:616px;top:48px" width="16" height="16" viewBox="0 0 16 16"><path d="M4 13.5A6 6 0 0 1 3.5 3" fill="none" stroke="#2196f3" stroke-width="1.6"/><path d="M11.5 2.3A6 6 0 0 1 12.5 12.5" fill="none" stroke="#2196f3" stroke-width="1.6"/><path d="M1.5 12L5.2 12.8L3.2 15.3Z" fill="#2196f3"/><path d="M10.5 0.5L13 3.5L9.8 3.8Z" fill="#2196f3"/><rect x="5" y="0.6" width="1.6" height="1.6" fill="#2196f3"/><rect x="7.5" y="0.3" width="1.6" height="1.6" fill="#2196f3"/><rect x="7" y="13.6" width="1.6" height="1.6" fill="#2196f3"/><rect x="9.5" y="13.3" width="1.6" height="1.6" fill="#2196f3"/><path d="M12 11.5L15 15" stroke="#2196f3" stroke-width="1.6"/></svg>
<svg style="left:639px;top:48px" width="16" height="16" viewBox="0 0 16 16"><path d="M14.5 0.5L15.8 1.8L10.5 7.2L9 5.8Z" fill="#3f51b5"/><path d="M7 5.5L10.8 9.3L9.6 10.5L5.8 6.7Z" fill="#3f51b5"/><path d="M5.5 6.5L9.8 10.8L6 16L0.5 10.5Z" fill="#ffc107"/><path d="M4 9L7.5 12.5M2.8 10.5L6 13.7" stroke="#f57f17" stroke-width="0.7"/><circle cx="1.8" cy="1.2" r="0.8" fill="#90caf9"/><circle cx="3.6" cy="4.8" r="1.1" fill="#bbdefb"/><circle cx="4.2" cy="1.8" r="0.5" fill="#bbdefb"/></svg>
<div class="ab" style="left:659px;top:45px;width:23px;height:21px;background:#cce8ff;border:1px solid #99d1ff;border-radius:2px"></div>
<div class="ab" style="left:683px;top:45px;width:22px;height:21px;background:#cce8ff;border:1px solid #99d1ff;border-radius:2px"></div>
<div class="ab" style="left:728px;top:45px;width:23px;height:21px;background:#cce8ff;border:1px solid #99d1ff;border-radius:2px"></div>
<svg style="left:663px;top:49px" width="16" height="15" viewBox="0 0 16 15"><path d="M6.5 0L13 12H0Z" fill="#ffc107"/><rect x="5.9" y="3.5" width="1.3" height="5" fill="#5d4037"/><rect x="5.9" y="9.5" width="1.3" height="1.3" fill="#5d4037"/><circle cx="12.6" cy="11.4" r="3.4" fill="#f44336"/><path d="M11.2 10L14 12.8M14 10L11.2 12.8" stroke="#fff" stroke-width="1"/></svg>
<svg style="left:684px;top:46px" width="20" height="20" viewBox="0 0 20 20"><g fill="none" stroke="#9c1b5b" stroke-width="1.25"><path d="M2.2 3.3L3.9 2.4V8.5"/><ellipse cx="8.3" cy="5.8" rx="1.3" ry="2.1"/><ellipse cx="14.9" cy="5.3" rx="1.9" ry="2.8"/><ellipse cx="5.3" cy="14.8" rx="1.9" ry="2.8"/><path d="M9.2 12.6L10.9 11.7V17.8"/><ellipse cx="15.2" cy="15.5" rx="1.5" ry="2.1"/></g></svg>
<svg style="left:708px;top:48px" width="16" height="15" viewBox="0 0 16 15"><rect x="0" y="0.6" width="16" height="2" rx="0.8" fill="#546e7a"/><path d="M0 7H11.5A3.3 3.3 0 0 1 11.5 13.6H7" fill="none" stroke="#546e7a" stroke-width="2"/><path d="M9 10.8L5.8 13.6L9 16.3Z" fill="#546e7a"/><rect x="0" y="12.6" width="3.5" height="2" fill="#546e7a"/></svg>
<svg style="left:732px;top:48px" width="16" height="16" viewBox="0 0 16 16"><g fill="none" stroke="#7cb342" stroke-width="1.3" stroke-linejoin="round"><path d="M10.2 1.2L8.6 1.4L7.2 3.2L6.2 3.6L4.8 5.4L3.6 6.8L2.4 8.2L1.6 8.9L2.8 9.9"/><path d="M13.8 5.2L14.8 6.1L13.6 7.6L12.4 9L11.2 10.4L10.2 11.2L8.8 12.8L7.6 13.8L9 14.2"/></g><rect x="5.4" y="7.4" width="1.7" height="1.7" fill="#4a6fc0"/><rect x="7.7" y="7.4" width="1.7" height="1.7" fill="#4a6fc0"/><rect x="10" y="7.4" width="1.7" height="1.7" fill="#4a6fc0"/></svg>
<svg style="left:759px;top:48px" width="7" height="16" viewBox="0 0 7 16"><rect x="0.5" y="0.5" width="5" height="3.6" fill="#00acc1"/><path d="M0.5 7H5.5V11.5L3 15.5H1L2.5 11.5H0.5Z" fill="#00acc1"/></svg>
<svg style="left:777px;top:48px" width="16" height="16" viewBox="0 0 16 16"><rect x="0" y="0" width="16" height="16" rx="2.5" fill="#666"/><path d="M4.2 4.2L11.8 11.8M11.8 4.2L4.2 11.8" stroke="#fff" stroke-width="1.7"/></svg>
<svg style="left:1815px;top:48px" width="16" height="16" viewBox="0 0 16 16"><path d="M3.5 0H9.5A3.6 3.6 0 0 1 9.3 7.2H6L4.8 12H0.8Z" fill="#1f6fd6"/><path d="M6 3.5H11.5A3.5 3.5 0 0 1 11.2 10.5H8.5L7.2 16H3.2Z" fill="#0f9be8"/><path d="M6 3.5H10A3 3 0 0 1 9.3 7.2H6Z" fill="#2a3a99"/></svg>
<svg style="left:2px;top:72px" width="18" height="16" viewBox="0 0 18 16"><path d="M1 1H15L9.5 7.5V14L7 13V7.5Z" fill="#ffc670"/><rect x="0" y="5" width="7" height="1.8" fill="#d1c4e9"/><rect x="0" y="7.5" width="7" height="1.8" fill="#d1c4e9"/><rect x="0" y="10" width="7" height="1.8" fill="#d1c4e9"/><path d="M9.5 10.5H16.5L13 14.5Z" fill="#777"/></svg>
<svg style="left:254px;top:72px" width="18" height="16" viewBox="0 0 18 16"><path d="M1 1H15L9.5 7.5V14L7 13V7.5Z" fill="#ffc670"/><rect x="0" y="5" width="7" height="7" fill="#dcecfc"/><path d="M0 5H7V7H2V12H0Z" fill="#4fc3d9"/><path d="M9.5 10.5H16.5L13 14.5Z" fill="#777"/></svg>
<svg style="left:507px;top:73px" width="15" height="14" viewBox="0 0 15 14"><path d="M7.5 0L9.6 4.9L14.8 5.3L10.8 8.7L12.1 13.8L7.5 11L2.9 13.8L4.2 8.7L0.2 5.3L5.4 4.9Z" fill="#bdbdbd"/></svg>
<svg style="left:976px;top:1016px" width="15" height="15" viewBox="0 0 16 16"><circle cx="8" cy="8" r="6.9" fill="#f0eeee" stroke="#1fb3c8" stroke-width="2"/><path d="M8 2.6V3.8M8 12.2V13.4M2.6 8H3.8M12.2 8H13.4" stroke="#c8c8c8" stroke-width="1"/><path d="M8 3.4V8.2L10.6 10.6" stroke="#222" stroke-width="1.2" fill="none"/><circle cx="8" cy="8.2" r="1.1" fill="#222"/></svg>
<svg style="left:1157px;top:1015px" width="16" height="16" viewBox="0 0 16 16"><path d="M0 14L3.4 12.2L6.8 10L10 8.8L11.6 6.2L13.4 4.6L16 5L14.6 6.6L13.6 9.5L12.6 12L11 11.5L8.8 15L7.6 13.4L2 14.8Z" fill="#c0714a"/><path d="M12.2 11L13.7 9.2L13.6 13.6Z" fill="#23386b"/></svg>
<svg style="left:1504px;top:1016px" width="15" height="15" viewBox="0 0 16 16"><circle cx="8" cy="8" r="6.9" fill="#f0eeee" stroke="#1fb3c8" stroke-width="2"/><path d="M8 2.6V3.8M8 12.2V13.4M2.6 8H3.8M12.2 8H13.4" stroke="#c8c8c8" stroke-width="1"/><path d="M8 3.4V8.2L10.6 10.6" stroke="#222" stroke-width="1.2" fill="none"/><circle cx="8" cy="8.2" r="1.1" fill="#222"/></svg>
<svg style="left:1662px;top:1016px" width="15" height="15" viewBox="0 0 15 15"><circle cx="7.5" cy="7.5" r="6.5" fill="none" stroke="#9c27b0" stroke-width="1.6"/></svg>
</body></html>
